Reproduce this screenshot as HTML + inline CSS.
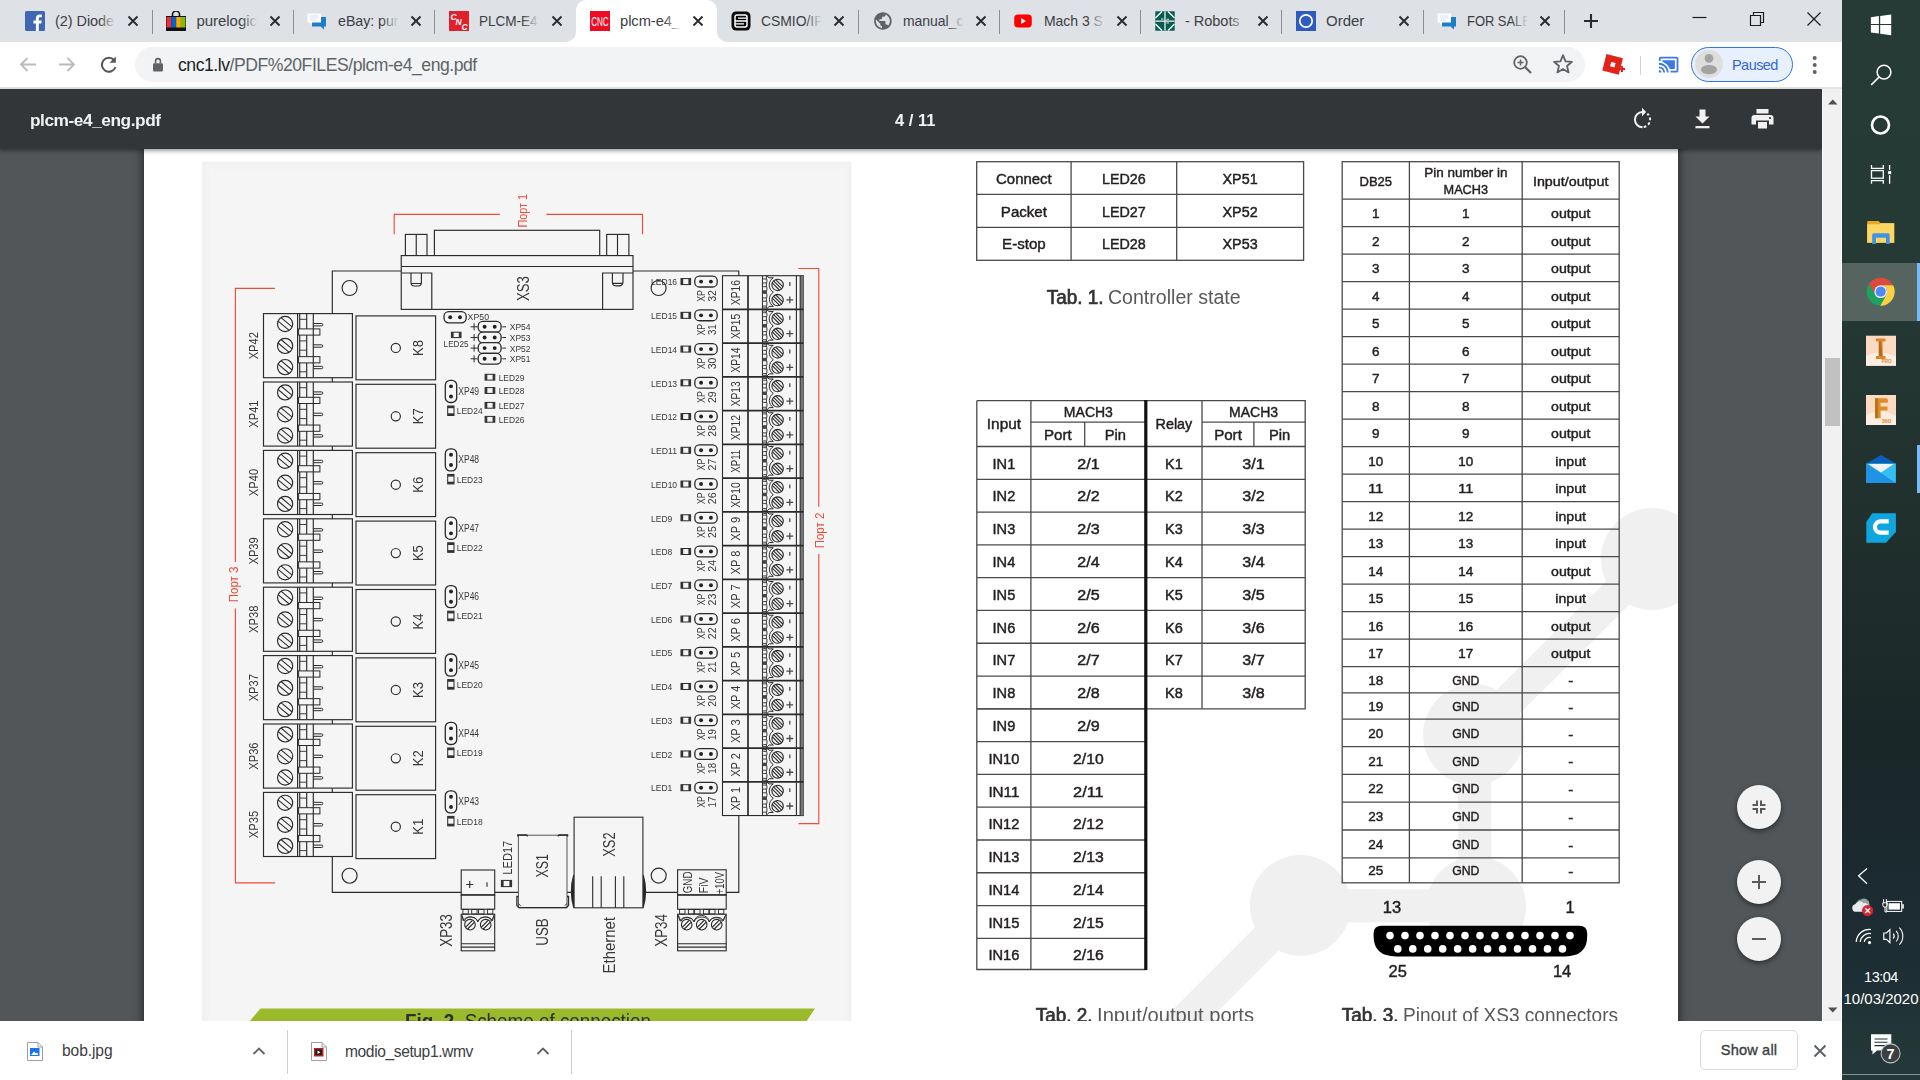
<!DOCTYPE html>
<html lang="en">
<head>
<meta charset="utf-8">
<title>plcm-e4_eng.pdf</title>
<style>
*{box-sizing:border-box;margin:0;padding:0}
html,body{width:1920px;height:1080px;overflow:hidden;background:#fff;font-family:"Liberation Sans",sans-serif;}
.abs{position:absolute}
#tabstrip{position:absolute;left:0;top:0;width:1842px;height:42px;background:#dee1e6}
.tab{position:absolute;top:0;height:42px}
.tab .ttl{position:absolute;top:11px;left:0;font-size:15px;line-height:20px;color:#3c4043;white-space:nowrap;overflow:hidden;letter-spacing:-0.05px}
.tab .fade{position:absolute;top:8px;width:20px;height:26px}
.tsep{position:absolute;top:10px;width:1px;height:24px;background:#8b8e93}
.tx{position:absolute;top:15px;width:12px;height:12px}
#acttab{position:absolute;left:576px;top:0;width:141px;height:42px;background:#fff;border-radius:10px 10px 0 0}
#toolbar{position:absolute;left:0;top:42px;width:1842px;height:46px;background:#fff}
#tbline{position:absolute;left:0;top:87px;width:1842px;height:2px;background:#e4e5e7}
#omni{position:absolute;left:135px;top:47px;width:1450px;height:35px;border-radius:18px;background:#f1f3f4}
#url{position:absolute;left:178px;top:53px;font-size:17.6px;line-height:24px;color:#5f6368;white-space:nowrap;letter-spacing:-0.46px}
#url b{font-weight:normal;color:#202124}
#pill{position:absolute;left:1691px;top:47px;width:102px;height:35px;border-radius:18px;border:1.600px solid #2f74e0;background:#e9f0fd}
#pill .av{position:absolute;left:2.500px;top:2px;width:28px;height:28px;border-radius:14px;background:#dedede;overflow:hidden}
#pill .tx2{position:absolute;left:40px;top:5px;font-size:14.5px;line-height:24px;color:#3367d6;letter-spacing:-0.55px}
#pdfbar{position:absolute;left:0;top:89px;width:1822px;height:60px;background:#323639;box-shadow:0 2px 4px rgba(0,0,0,.38);z-index:5}
#pdfbar .name{position:absolute;left:30px;top:19.5px;font-size:17.3px;font-weight:bold;color:#f1f1f1;line-height:22px;letter-spacing:-0.45px}
#pdfbar .pg{position:absolute;left:895px;top:21px;font-size:16.5px;font-weight:bold;color:#f1f1f1;line-height:20px;letter-spacing:0px;white-space:pre}
#viewer{position:absolute;left:0;top:149px;width:1823px;height:871.600px;background:#525659;overflow:hidden}
#page{position:absolute;left:144px;top:-10px;width:1534px;height:900px;background:#fff;box-shadow:0 0 9px 1px rgba(0,0,0,.55)}
#sb{position:absolute;left:1822px;top:89px;width:20px;height:931.600px;background:#f1f1f1;z-index:6;border-left:1px solid #fbfbfb;border-right:1px solid #fbfbfb}
#sb .th{position:absolute;left:2px;top:269px;width:15px;height:68px;background:#c1c1c1}
#dl{position:absolute;left:0;top:1020.600px;width:1842px;height:60px;background:#fff}
#dl .nm{position:absolute;top:21px;font-size:15.6px;line-height:20px;color:#3c4043;letter-spacing:-0.1px}
#dl .sp{position:absolute;top:9px;width:1px;height:44px;background:#d0d0d0}
#showall{position:absolute;left:1700px;top:9.700px;width:98px;height:39.500px;border:1px solid #dadce0;border-radius:5px;font-size:14.600px;line-height:38px;text-align:center;color:#3c4043;font-weight:normal;letter-spacing:0.150px;-webkit-text-stroke:0.350px #3c4043}
#task{position:absolute;left:1842px;top:0;width:78px;height:1080px;background:linear-gradient(180deg,#263b36 0%,#263a35 22%,#22332f 42%,#1e2d2b 55%,#1a2728 68%,#1b2a30 80%,#1d2e34 90%,#223638 96%,#26393a 100%)}
.zb{position:absolute;width:44px;height:44px;border-radius:22px;background:#f2f2f2;box-shadow:0 2px 5px rgba(0,0,0,.5)}
</style>
</head>
<body>

<div id="tabstrip"></div>
<div id="acttab"></div>
<svg class="abs" style="left:566px;top:32px" width="10" height="10"><path d="M10 0 V10 H0 A10 10 0 0 0 10 0Z" fill="#fff"/></svg>
<svg class="abs" style="left:717px;top:32px" width="10" height="10"><path d="M0 0 V10 H10 A10 10 0 0 1 0 0Z" fill="#fff"/></svg>
<div class="tab" style="left:10.8px;width:141.2px">
<svg class="abs" style="left:14.2px;top:11px" width="20" height="20" viewBox="0 0 20 20"><rect width="20" height="20" rx="1.5" fill="#4267b2"/><path d="M13.8 20v-7.6h2.5l.4-3h-2.9V7.6c0-.9.3-1.4 1.5-1.4h1.5V3.5c-.3 0-1.200-.1-2.200-.1-2.200 0-3.700 1.300-3.700 3.800v2.200H8.400v3h2.500V20z" fill="#fff"/></svg>
<div class="ttl" style="left:44.5px;width:64px"><span style="display:inline-block;transform:scaleX(0.965);transform-origin:0 50%">(2) Diode</span></div>
<div class="fade" style="left:88.5px;background:linear-gradient(90deg,rgba(222,225,230,0),rgba(222,225,230,1) 85%)"></div>
<svg class="tx" style="left:116.5px" viewBox="0 0 12 12"><path d="M1.500 1.500 L10.500 10.500 M10.500 1.500 L1.500 10.500" stroke="#2a2c30" stroke-width="1.900"/></svg>
</div>
<div class="tsep" style="left:151.7px"></div>
<div class="tab" style="left:152.0px;width:141.2px">
<svg class="abs" style="left:14.2px;top:11px" width="20" height="20" viewBox="0 0 20 20"><path d="M6.500 5 V3.500 A3.500 3.500 0 0 1 13.500 3.500 V5" fill="none" stroke="#111" stroke-width="1.600"/><rect x="0" y="5" width="20" height="15" fill="#111"/><rect x="0.500" y="6" width="5" height="10.500" fill="#e53238"/><rect x="5.500" y="6" width="4.700" height="10.500" fill="#0064d2"/><rect x="10.200" y="6" width="4.700" height="10.500" fill="#f5af02"/><rect x="14.900" y="6" width="4.600" height="10.500" fill="#86b817"/></svg>
<div class="ttl" style="left:44.5px;width:64px"><span style="display:inline-block;transform:scaleX(1.0);transform-origin:0 50%">purelogic</span></div>
<div class="fade" style="left:88.5px;background:linear-gradient(90deg,rgba(222,225,230,0),rgba(222,225,230,1) 85%)"></div>
<svg class="tx" style="left:116.5px" viewBox="0 0 12 12"><path d="M1.500 1.500 L10.500 10.500 M10.500 1.500 L1.500 10.500" stroke="#2a2c30" stroke-width="1.900"/></svg>
</div>
<div class="tsep" style="left:292.9px"></div>
<div class="tab" style="left:293.2px;width:141.2px">
<svg class="abs" style="left:14.2px;top:11px" width="20" height="20" viewBox="0 0 20 20"><path d="M5 6 H19 V15.500 H17 V18.500 L13.500 15.500 H5Z" fill="#1e7fc8"/><path d="M0.500 2.500 H14 V11.500 H5.500 L3 14 V11.500 H0.500Z" fill="#fafcff"/><path d="M3 5h8M3 7h8M3 9h6" stroke="#d5dde6" stroke-width=".7"/></svg>
<div class="ttl" style="left:44.5px;width:64px"><span style="display:inline-block;transform:scaleX(0.95);transform-origin:0 50%">eBay: pur</span></div>
<div class="fade" style="left:88.5px;background:linear-gradient(90deg,rgba(222,225,230,0),rgba(222,225,230,1) 85%)"></div>
<svg class="tx" style="left:116.5px" viewBox="0 0 12 12"><path d="M1.500 1.500 L10.500 10.500 M10.500 1.500 L1.500 10.500" stroke="#2a2c30" stroke-width="1.900"/></svg>
</div>
<div class="tsep" style="left:434.1px"></div>
<div class="tab" style="left:434.4px;width:141.2px">
<svg class="abs" style="left:14.2px;top:11px" width="20" height="20" viewBox="0 0 20 20"><rect width="20" height="20" fill="#e0202b"/><text x="1.500" y="8.500" font-size="8.500" font-weight="bold" font-style="italic" fill="#fff" font-family="Liberation Sans">C</text><text x="6.500" y="14" font-size="8.500" font-weight="bold" font-style="italic" fill="#fff" font-family="Liberation Sans">N</text><text x="12.500" y="19" font-size="8.500" font-weight="bold" font-style="italic" fill="#fff" font-family="Liberation Sans">C</text></svg>
<div class="ttl" style="left:44.5px;width:63px"><span style="display:inline-block;transform:scaleX(0.903);transform-origin:0 50%">PLCM-E4</span></div>
<div class="fade" style="left:87.5px;background:linear-gradient(90deg,rgba(222,225,230,0),rgba(222,225,230,1) 85%)"></div>
<svg class="tx" style="left:116.5px" viewBox="0 0 12 12"><path d="M1.500 1.500 L10.500 10.500 M10.500 1.500 L1.500 10.500" stroke="#2a2c30" stroke-width="1.900"/></svg>
</div>
<div class="tab" style="left:575.6px;width:141.2px">
<svg class="abs" style="left:14.2px;top:11px" width="20" height="20" viewBox="0 0 20 20"><rect width="20" height="20" fill="#f00b24"/><text x="1.200" y="14.500" font-size="13" textLength="17.500" lengthAdjust="spacingAndGlyphs" fill="#fff" font-family="Liberation Sans">CNC</text></svg>
<div class="ttl" style="left:44.5px;width:64px"><span style="display:inline-block;transform:scaleX(0.98);transform-origin:0 50%">plcm-e4_</span></div>
<div class="fade" style="left:88.5px;background:linear-gradient(90deg,rgba(255,255,255,0),rgba(255,255,255,1) 85%)"></div>
<svg class="tx" style="left:116.5px" viewBox="0 0 12 12"><path d="M1.500 1.500 L10.500 10.500 M10.500 1.500 L1.500 10.500" stroke="#2a2c30" stroke-width="1.900"/></svg>
</div>
<div class="tab" style="left:716.8px;width:141.2px">
<svg class="abs" style="left:14.2px;top:11px" width="20" height="20" viewBox="0 0 20 20"><rect x="0.500" y="0.500" width="19" height="19" rx="4.500" fill="#0a0a0a"/><rect x="4" y="4" width="12" height="12" rx="2" fill="none" stroke="#fff" stroke-width="1.500"/><path d="M4 10 H16 M7 7.200 H16 M4 12.800 H13" stroke="#fff" stroke-width="1.300"/></svg>
<div class="ttl" style="left:44.5px;width:64px"><span style="display:inline-block;transform:scaleX(0.93);transform-origin:0 50%">CSMIO/IP</span></div>
<div class="fade" style="left:88.5px;background:linear-gradient(90deg,rgba(222,225,230,0),rgba(222,225,230,1) 85%)"></div>
<svg class="tx" style="left:116.5px" viewBox="0 0 12 12"><path d="M1.500 1.500 L10.500 10.500 M10.500 1.500 L1.500 10.500" stroke="#2a2c30" stroke-width="1.900"/></svg>
</div>
<div class="tsep" style="left:857.7px"></div>
<div class="tab" style="left:858.0px;width:141.2px">
<svg class="abs" style="left:14.2px;top:11px" width="20" height="20" viewBox="0 0 20 20"><g transform="translate(0.400 -0.500) scale(0.875)"><path d="M12 2C6.480 2 2 6.480 2 12s4.480 10 10 10 10-4.480 10-10S17.520 2 12 2zm-1 17.930c-3.950-.490-7-3.850-7-7.930 0-.620.080-1.210.210-1.790L9 15v1c0 1.100.900 2 2 2v1.930zm6.900-2.540c-.260-.810-1-1.390-1.900-1.390h-1v-3c0-.550-.450-1-1-1H8v-2h2c.550 0 1-.450 1-1V7h2c1.100 0 2-.900 2-2v-.410c2.930 1.190 5 4.060 5 7.410 0 2.080-.800 3.970-2.100 5.390z" fill="#5f6368"/></g></svg>
<div class="ttl" style="left:44.5px;width:64px"><span style="display:inline-block;transform:scaleX(0.934);transform-origin:0 50%">manual_c</span></div>
<div class="fade" style="left:88.5px;background:linear-gradient(90deg,rgba(222,225,230,0),rgba(222,225,230,1) 85%)"></div>
<svg class="tx" style="left:116.5px" viewBox="0 0 12 12"><path d="M1.500 1.500 L10.500 10.500 M10.500 1.500 L1.500 10.500" stroke="#2a2c30" stroke-width="1.900"/></svg>
</div>
<div class="tsep" style="left:998.9px"></div>
<div class="tab" style="left:999.2px;width:141.2px">
<svg class="abs" style="left:14.2px;top:11px" width="20" height="20" viewBox="0 0 20 20"><rect x="1.200" y="3.400" width="17.600" height="13" rx="3.600" fill="#f00"/><path d="M8.200 6.900 L13 9.900 L8.200 12.900Z" fill="#fff"/></svg>
<div class="ttl" style="left:44.5px;width:64px"><span style="display:inline-block;transform:scaleX(0.934);transform-origin:0 50%">Mach 3 S</span></div>
<div class="fade" style="left:88.5px;background:linear-gradient(90deg,rgba(222,225,230,0),rgba(222,225,230,1) 85%)"></div>
<svg class="tx" style="left:116.5px" viewBox="0 0 12 12"><path d="M1.500 1.500 L10.500 10.500 M10.500 1.500 L1.500 10.500" stroke="#2a2c30" stroke-width="1.900"/></svg>
</div>
<div class="tsep" style="left:1140.1px"></div>
<div class="tab" style="left:1140.4px;width:141.2px">
<svg class="abs" style="left:14.2px;top:11px" width="20" height="20" viewBox="0 0 20 20"><rect x="0.300" y="0.300" width="19.400" height="19.400" fill="#0b5a50"/><path d="M0.500 7 L7 0.500 M13 0.500 L19.500 7 M19.500 13 L13 19.500 M7 19.500 L0.500 13 M10 0.500 V19.500 M0.500 10 H19.500" stroke="#f2f7f5" stroke-width="1.250" fill="none"/><path d="M2.800 4.300 L4.300 2.800 M15.700 2.800 L17.200 4.300 M17.200 15.700 L15.700 17.200 M4.300 17.200 L2.800 15.700 M6 8 H8.500 M11.500 8.300 H14 M11.500 12 H14" stroke="#dbe9e5" stroke-width="1.100" fill="none"/></svg>
<div class="ttl" style="left:44.5px;width:64px"><span style="display:inline-block;transform:scaleX(0.97);transform-origin:0 50%">- Robots</span></div>
<div class="fade" style="left:88.5px;background:linear-gradient(90deg,rgba(222,225,230,0),rgba(222,225,230,1) 85%)"></div>
<svg class="tx" style="left:116.5px" viewBox="0 0 12 12"><path d="M1.500 1.500 L10.500 10.500 M10.500 1.500 L1.500 10.500" stroke="#2a2c30" stroke-width="1.900"/></svg>
</div>
<div class="tsep" style="left:1281.3px"></div>
<div class="tab" style="left:1281.6px;width:141.2px">
<svg class="abs" style="left:14.2px;top:11px" width="20" height="20" viewBox="0 0 20 20"><rect width="20" height="20" fill="#2f5bbf"/><circle cx="10" cy="10" r="6.200" fill="none" stroke="#fff" stroke-width="1.700"/></svg>
<div class="ttl" style="left:44.5px;width:64px"><span style="display:inline-block;transform:scaleX(1.0);transform-origin:0 50%">Order</span></div>
<div class="fade" style="left:88.5px;background:linear-gradient(90deg,rgba(222,225,230,0),rgba(222,225,230,1) 85%)"></div>
<svg class="tx" style="left:116.5px" viewBox="0 0 12 12"><path d="M1.500 1.500 L10.500 10.500 M10.500 1.500 L1.500 10.500" stroke="#2a2c30" stroke-width="1.900"/></svg>
</div>
<div class="tsep" style="left:1422.5px"></div>
<div class="tab" style="left:1422.8px;width:141.2px">
<svg class="abs" style="left:14.2px;top:11px" width="20" height="20" viewBox="0 0 20 20"><path d="M5 6 H19 V15.500 H17 V18.500 L13.500 15.500 H5Z" fill="#1e7fc8"/><path d="M0.500 2.500 H14 V11.500 H5.500 L3 14 V11.500 H0.500Z" fill="#fafcff"/><path d="M3 5h8M3 7h8M3 9h6" stroke="#d5dde6" stroke-width=".7"/></svg>
<div class="ttl" style="left:44.5px;width:64px"><span style="display:inline-block;transform:scaleX(0.865);transform-origin:0 50%">FOR SALE</span></div>
<div class="fade" style="left:88.5px;background:linear-gradient(90deg,rgba(222,225,230,0),rgba(222,225,230,1) 85%)"></div>
<svg class="tx" style="left:116.5px" viewBox="0 0 12 12"><path d="M1.500 1.500 L10.500 10.500 M10.500 1.500 L1.500 10.500" stroke="#2a2c30" stroke-width="1.900"/></svg>
</div>
<div class="tsep" style="left:1563.7px"></div>
<svg class="abs" style="left:1583px;top:13px" width="16" height="16"><path d="M8 1 V15 M1 8 H15" stroke="#2a2c30" stroke-width="2.100"/></svg>
<svg class="abs" style="left:1690px;top:8px" width="140" height="24"><path d="M2.500 9.500 H16.500" stroke="#1b1b1b" stroke-width="1.200"/><path d="M60.500 7.500 H70.500 V17.500 H60.500Z M63.500 7.500 V4.500 H73.500 V14.500 H70.500" fill="none" stroke="#1b1b1b" stroke-width="1.200"/><path d="M117.500 4.500 L130.500 17.500 M130.500 4.500 L117.500 17.500" stroke="#1b1b1b" stroke-width="1.200"/></svg>
<div id="toolbar"></div><div id="tbline"></div>
<svg class="abs" style="left:17px;top:54px" width="110" height="22"><path d="M19 10.500 H4 M10.500 4 L4 10.500 L10.500 17" fill="none" stroke="#babcbe" stroke-width="1.900"/><path d="M42 10.500 H57 M50.500 4 L57 10.500 L50.500 17" fill="none" stroke="#babcbe" stroke-width="1.900"/><path d="M97.200 6.200 A7 7 0 1 0 98.500 13" fill="none" stroke="#54575b" stroke-width="2"/><path d="M98.800 2.500 V8.800 H92.500Z" fill="#54575b"/></svg>
<div id="omni"></div>
<svg class="abs" style="left:151px;top:55px" width="14" height="18"><rect x="2" y="8.300" width="10" height="8.200" rx="1.100" fill="#5f6368"/><path d="M4.600 8.300 V6 A2.400 2.400 0 0 1 9.400 6 V8.300" fill="none" stroke="#5f6368" stroke-width="1.600"/></svg>
<div id="url"><b>cnc1.lv</b>/PDF%20FILES/plcm-e4_eng.pdf</div>
<svg class="abs" style="left:1511px;top:53px" width="24" height="24"><circle cx="9.500" cy="9.500" r="6.300" fill="none" stroke="#5f6368" stroke-width="1.800"/><path d="M14 14 L20 20" stroke="#5f6368" stroke-width="2.200"/><path d="M9.500 6.500 V12.500 M6.500 9.500 H12.500" stroke="#5f6368" stroke-width="1.500"/></svg>
<svg class="abs" style="left:1551px;top:52px" width="24" height="24"><path d="M12 3.200 L14.500 9.300 L21 9.800 L16 14 L17.600 20.400 L12 16.900 L6.400 20.400 L8 14 L3 9.800 L9.500 9.300Z" fill="none" stroke="#5f6368" stroke-width="1.800" stroke-linejoin="round"/></svg>
<svg class="abs" style="left:1600px;top:52px" width="28" height="26"><g transform="rotate(14 13 13)"><rect x="4" y="4" width="17" height="17" fill="#e2231a"/><rect x="10.500" y="10.500" width="4.500" height="4.500" fill="#fff"/></g><path d="M19 17 h6 M22 14 v6" stroke="#e2231a" stroke-width="2"/></svg>
<div class="abs" style="left:1640px;top:56px;width:1px;height:19px;background:#cfd1d4"></div>
<svg class="abs" style="left:1658.100px;top:54.200px" width="22" height="20" viewBox="0 0 24.830 22.570"><path d="M1 18v3h3c0-1.660-1.340-3-3-3zm0-4v2c2.760 0 5 2.240 5 5h2c0-3.870-3.130-7-7-7zm18-7H5v1.630c3.960 1.280 7.090 4.410 8.370 8.370H19V7zM1 10v2c4.970 0 9 4.030 9 9h2c0-6.080-4.930-11-11-11zm20-7H3c-1.100 0-2 .900-2 2v3h2V5h18v14h-7v2h7c1.100 0 2-.900 2-2V5c0-1.100-.900-2-2-2z" fill="#3b78e7"/></svg>
<div id="pill"><div class="av"><svg width="28" height="28"><circle cx="14" cy="8.300" r="4.400" fill="#a3a3a3"/><ellipse cx="14" cy="19.600" rx="8" ry="4.700" fill="#a3a3a3"/></svg></div><div class="tx2">Paused</div></div>
<svg class="abs" style="left:1811px;top:55px" width="8" height="22"><circle cx="3.700" cy="3" r="2" fill="#5f6368"/><circle cx="3.700" cy="10" r="2" fill="#5f6368"/><circle cx="3.700" cy="17" r="2" fill="#5f6368"/></svg>
<div id="pdfbar"><div class="name">plcm-e4_eng.pdf</div><div class="pg">4 / 11</div>
<svg class="abs" style="left:1630px;top:18px" width="24" height="24"><path d="M12.500 5 A7.600 7.600 0 1 0 12.500 20.200" fill="none" stroke="#f1f1f1" stroke-width="2"/><path d="M12.500 20.200 A7.600 7.600 0 0 0 17.300 6.700" fill="none" stroke="#f1f1f1" stroke-width="2" stroke-dasharray="2.700 2.300" stroke-dashoffset="-1.200"/><path d="M12 0.800 L16.200 5 L12 9.200Z" fill="#f1f1f1"/></svg>
<svg class="abs" style="left:1691px;top:18px" width="24" height="24"><path d="M8.500 2.500 H14.500 V9.500 H18.500 L11.500 16.500 L4.500 9.500 H8.500Z" fill="#f1f1f1"/><rect x="4.500" y="19" width="14" height="2.300" fill="#f1f1f1"/></svg>
<svg class="abs" style="left:1750px;top:18px" width="26" height="24"><rect x="6.500" y="2" width="12" height="4.500" fill="#f1f1f1"/><path d="M4.500 8 H20.500 A3 3 0 0 1 23.500 11 V17.500 H19 V13.500 H6 V17.500 H1.500 V11 A3 3 0 0 1 4.500 8Z" fill="#f1f1f1"/><rect x="8" y="15" width="9" height="6.500" fill="#f1f1f1"/><circle cx="20" cy="11" r="1.100" fill="#323639"/></svg>
</div>
<div id="viewer"><div id="page"></div>
<svg class="abs" style="left:0;top:-149px;will-change:transform" width="1823" height="1080" viewBox="0 0 1823 1080">
<clipPath id="pgclip"><rect x="144" y="149" width="1533.500" height="880"/></clipPath>
<g fill="#f0f0f0" stroke="#f0f0f0" clip-path="url(#pgclip)">
<circle cx="1652" cy="559" r="51" stroke="none"/>
<circle cx="1473.5" cy="734.6" r="50.5" stroke="none"/>
<circle cx="1476" cy="906.5" r="50" stroke="none"/>
<circle cx="1300.3" cy="905.5" r="50.4" stroke="none"/>
<path d="M1652 559 L1474.500 735 L1475 906 L1300.300 905.500 L1160 1045.800" fill="none" stroke-width="33"/>
</g>

<rect x="202" y="161.700" width="649.500" height="880" fill="#f1f1f1"/><rect x="205" y="164.700" width="643.500" height="880" fill="#f3f3f3"/><rect x="209" y="168.700" width="635.500" height="880" fill="#f5f5f5"/>
<g fill="none" stroke="#2a2a2a" stroke-width="1.150" font-family="Liberation Sans">
<path d="M401.250 271 H332.300 V892.400 H738.800 V271 H633"/>
<circle cx="349.6" cy="288" r="7.5"/>
<circle cx="658.6" cy="288" r="7.5"/>
<circle cx="349.6" cy="875.7" r="7.5"/>
<circle cx="658.7" cy="875.6" r="7.5"/>
<rect x="434.4" y="230.3" width="165.3" height="25.3" fill="#f5f5f5"/>
<rect x="405.4" y="234.4" width="21.6" height="21.2" fill="#f5f5f5"/>
<path d="M416.25 234.4L416.25 255.6"/>
<rect x="606.7" y="234.4" width="22.2" height="21.2" fill="#f5f5f5"/>
<path d="M617.5 234.4L617.5 255.6"/>
<rect x="401.25" y="255.6" width="231.75" height="53.8" fill="#f5f5f5"/>
<path d="M401.25 266.5L633 266.5"/>
<path d="M401.250 273 H431.800 V309.400 M633 273 H602.600 V309.400"/>
<path d="M411 273 V282.500 A3.500 3.500 0 0 0 414.500 286 H418 A3.500 3.500 0 0 0 421.400 282.500 V273 M411 283.500 H421.400"/>
<path d="M612.400 273 V282.300 A3.500 3.500 0 0 0 615.900 285.800 H619.500 A3.500 3.500 0 0 0 623 282.300 V273 M612.400 283.300 H623"/>
<rect x="263.5" y="313.6" width="88.9" height="64.1" fill="#f5f5f5"/>
<circle cx="285.1" cy="324" r="7.6" fill="#f5f5f5"/><path d="M281.01 317.59L292.12 326.91" stroke-width="1.05"/><path d="M278.08 321.09L289.19 330.41" stroke-width="1.05"/>
<circle cx="285.1" cy="345.9" r="7.6" fill="#f5f5f5"/><path d="M281.01 339.49L292.12 348.81" stroke-width="1.05"/><path d="M278.08 342.99L289.19 352.31" stroke-width="1.05"/>
<circle cx="285.1" cy="367.1" r="7.6" fill="#f5f5f5"/><path d="M281.01 360.69L292.12 370.01" stroke-width="1.05"/><path d="M278.08 364.19L289.19 373.51" stroke-width="1.05"/>
<path d="M297.6 313.6L297.6 377.7"/>
<path d="M299.7 313.6L299.7 377.7"/>
<path d="M306.7 313.6L306.7 377.7"/>
<path d="M313.3 313.6L313.3 377.7"/>
<path d="M299.7 319.3L306.7 319.3" stroke-width="0.9"/>
<path d="M299.7 340.9L306.7 340.9" stroke-width="0.9"/>
<path d="M299.7 350.2L306.7 350.2" stroke-width="0.9"/>
<path d="M299.7 371.8L306.7 371.8" stroke-width="0.9"/>
<rect x="298.6" y="328.9" width="21.3" height="6.2" fill="#f5f5f5" stroke-width="1"/>
<path d="M313.3 328.9L313.3 335.1"/>
<rect x="298.6" y="356.65" width="21.3" height="6.25" fill="#f5f5f5" stroke-width="1"/>
<path d="M313.3 356.65L313.3 362.9"/>
<path d="M313.300 323.5 H321.600 A1.200 1.200 0 0 1 321.600 325.9 H313.300" stroke-width="1"/>
<path d="M313.300 344.8 H321.600 A1.200 1.200 0 0 1 321.600 347.2 H313.300" stroke-width="1"/>
<path d="M313.300 366.3 H321.600 A1.200 1.200 0 0 1 321.600 368.7 H313.300" stroke-width="1"/>
<rect x="356" y="315.9" width="79.6" height="63.9" fill="#f5f5f5"/>
<circle cx="395.8" cy="347.9" r="4.6"/>
<rect x="263.5" y="382" width="88.9" height="64.1" fill="#f5f5f5"/>
<circle cx="285.1" cy="392.4" r="7.6" fill="#f5f5f5"/><path d="M281.01 385.99L292.12 395.31" stroke-width="1.05"/><path d="M278.08 389.49L289.19 398.81" stroke-width="1.05"/>
<circle cx="285.1" cy="414.3" r="7.6" fill="#f5f5f5"/><path d="M281.01 407.89L292.12 417.21" stroke-width="1.05"/><path d="M278.08 411.39L289.19 420.71" stroke-width="1.05"/>
<circle cx="285.1" cy="435.5" r="7.6" fill="#f5f5f5"/><path d="M281.01 429.09L292.12 438.41" stroke-width="1.05"/><path d="M278.08 432.59L289.19 441.91" stroke-width="1.05"/>
<path d="M297.6 382L297.6 446.1"/>
<path d="M299.7 382L299.7 446.1"/>
<path d="M306.7 382L306.7 446.1"/>
<path d="M313.3 382L313.3 446.1"/>
<path d="M299.7 387.7L306.7 387.7" stroke-width="0.9"/>
<path d="M299.7 409.3L306.7 409.3" stroke-width="0.9"/>
<path d="M299.7 418.6L306.7 418.6" stroke-width="0.9"/>
<path d="M299.7 440.2L306.7 440.2" stroke-width="0.9"/>
<rect x="298.6" y="397.3" width="21.3" height="6.2" fill="#f5f5f5" stroke-width="1"/>
<path d="M313.3 397.3L313.3 403.5"/>
<rect x="298.6" y="425.05" width="21.3" height="6.25" fill="#f5f5f5" stroke-width="1"/>
<path d="M313.3 425.05L313.3 431.3"/>
<path d="M313.300 391.9 H321.600 A1.200 1.200 0 0 1 321.600 394.3 H313.300" stroke-width="1"/>
<path d="M313.300 413.2 H321.600 A1.200 1.200 0 0 1 321.600 415.6 H313.300" stroke-width="1"/>
<path d="M313.300 434.7 H321.600 A1.200 1.200 0 0 1 321.600 437.1 H313.300" stroke-width="1"/>
<rect x="356" y="384.3" width="79.6" height="63.9" fill="#f5f5f5"/>
<circle cx="395.8" cy="416.3" r="4.6"/>
<rect x="263.5" y="450.4" width="88.9" height="64.1" fill="#f5f5f5"/>
<circle cx="285.1" cy="460.8" r="7.6" fill="#f5f5f5"/><path d="M281.01 454.39L292.12 463.71" stroke-width="1.05"/><path d="M278.08 457.89L289.19 467.21" stroke-width="1.05"/>
<circle cx="285.1" cy="482.7" r="7.6" fill="#f5f5f5"/><path d="M281.01 476.29L292.12 485.61" stroke-width="1.05"/><path d="M278.08 479.79L289.19 489.11" stroke-width="1.05"/>
<circle cx="285.1" cy="503.9" r="7.6" fill="#f5f5f5"/><path d="M281.01 497.49L292.12 506.81" stroke-width="1.05"/><path d="M278.08 500.99L289.19 510.31" stroke-width="1.05"/>
<path d="M297.6 450.4L297.6 514.5"/>
<path d="M299.7 450.4L299.7 514.5"/>
<path d="M306.7 450.4L306.7 514.5"/>
<path d="M313.3 450.4L313.3 514.5"/>
<path d="M299.7 456.1L306.7 456.1" stroke-width="0.9"/>
<path d="M299.7 477.7L306.7 477.7" stroke-width="0.9"/>
<path d="M299.7 487L306.7 487" stroke-width="0.9"/>
<path d="M299.7 508.6L306.7 508.6" stroke-width="0.9"/>
<rect x="298.6" y="465.7" width="21.3" height="6.2" fill="#f5f5f5" stroke-width="1"/>
<path d="M313.3 465.7L313.3 471.9"/>
<rect x="298.6" y="493.45" width="21.3" height="6.25" fill="#f5f5f5" stroke-width="1"/>
<path d="M313.3 493.45L313.3 499.7"/>
<path d="M313.300 460.3 H321.600 A1.200 1.200 0 0 1 321.600 462.7 H313.300" stroke-width="1"/>
<path d="M313.300 481.6 H321.600 A1.200 1.200 0 0 1 321.600 484 H313.300" stroke-width="1"/>
<path d="M313.300 503.1 H321.600 A1.200 1.200 0 0 1 321.600 505.5 H313.300" stroke-width="1"/>
<rect x="356" y="452.7" width="79.6" height="63.9" fill="#f5f5f5"/>
<circle cx="395.8" cy="484.7" r="4.6"/>
<rect x="263.5" y="518.8" width="88.9" height="64.1" fill="#f5f5f5"/>
<circle cx="285.1" cy="529.2" r="7.6" fill="#f5f5f5"/><path d="M281.01 522.79L292.12 532.11" stroke-width="1.05"/><path d="M278.08 526.29L289.19 535.61" stroke-width="1.05"/>
<circle cx="285.1" cy="551.1" r="7.6" fill="#f5f5f5"/><path d="M281.01 544.69L292.12 554.01" stroke-width="1.05"/><path d="M278.08 548.19L289.19 557.51" stroke-width="1.05"/>
<circle cx="285.1" cy="572.3" r="7.6" fill="#f5f5f5"/><path d="M281.01 565.89L292.12 575.21" stroke-width="1.05"/><path d="M278.08 569.39L289.19 578.71" stroke-width="1.05"/>
<path d="M297.6 518.8L297.6 582.9"/>
<path d="M299.7 518.8L299.7 582.9"/>
<path d="M306.7 518.8L306.7 582.9"/>
<path d="M313.3 518.8L313.3 582.9"/>
<path d="M299.7 524.5L306.7 524.5" stroke-width="0.9"/>
<path d="M299.7 546.1L306.7 546.1" stroke-width="0.9"/>
<path d="M299.7 555.4L306.7 555.4" stroke-width="0.9"/>
<path d="M299.7 577L306.7 577" stroke-width="0.9"/>
<rect x="298.6" y="534.1" width="21.3" height="6.2" fill="#f5f5f5" stroke-width="1"/>
<path d="M313.3 534.1L313.3 540.3"/>
<rect x="298.6" y="561.85" width="21.3" height="6.25" fill="#f5f5f5" stroke-width="1"/>
<path d="M313.3 561.85L313.3 568.1"/>
<path d="M313.300 528.7 H321.600 A1.200 1.200 0 0 1 321.600 531.1 H313.300" stroke-width="1"/>
<path d="M313.300 550 H321.600 A1.200 1.200 0 0 1 321.600 552.4 H313.300" stroke-width="1"/>
<path d="M313.300 571.5 H321.600 A1.200 1.200 0 0 1 321.600 573.9 H313.300" stroke-width="1"/>
<rect x="356" y="521.1" width="79.6" height="63.9" fill="#f5f5f5"/>
<circle cx="395.8" cy="553.1" r="4.6"/>
<rect x="263.5" y="587.2" width="88.9" height="64.1" fill="#f5f5f5"/>
<circle cx="285.1" cy="597.6" r="7.6" fill="#f5f5f5"/><path d="M281.01 591.19L292.12 600.51" stroke-width="1.05"/><path d="M278.08 594.69L289.19 604.01" stroke-width="1.05"/>
<circle cx="285.1" cy="619.5" r="7.6" fill="#f5f5f5"/><path d="M281.01 613.09L292.12 622.41" stroke-width="1.05"/><path d="M278.08 616.59L289.19 625.91" stroke-width="1.05"/>
<circle cx="285.1" cy="640.7" r="7.6" fill="#f5f5f5"/><path d="M281.01 634.29L292.12 643.61" stroke-width="1.05"/><path d="M278.08 637.79L289.19 647.11" stroke-width="1.05"/>
<path d="M297.6 587.2L297.6 651.3"/>
<path d="M299.7 587.2L299.7 651.3"/>
<path d="M306.7 587.2L306.7 651.3"/>
<path d="M313.3 587.2L313.3 651.3"/>
<path d="M299.7 592.9L306.7 592.9" stroke-width="0.9"/>
<path d="M299.7 614.5L306.7 614.5" stroke-width="0.9"/>
<path d="M299.7 623.8L306.7 623.8" stroke-width="0.9"/>
<path d="M299.7 645.4L306.7 645.4" stroke-width="0.9"/>
<rect x="298.6" y="602.5" width="21.3" height="6.2" fill="#f5f5f5" stroke-width="1"/>
<path d="M313.3 602.5L313.3 608.7"/>
<rect x="298.6" y="630.25" width="21.3" height="6.25" fill="#f5f5f5" stroke-width="1"/>
<path d="M313.3 630.25L313.3 636.5"/>
<path d="M313.300 597.1 H321.600 A1.200 1.200 0 0 1 321.600 599.5 H313.300" stroke-width="1"/>
<path d="M313.300 618.4 H321.600 A1.200 1.200 0 0 1 321.600 620.8 H313.300" stroke-width="1"/>
<path d="M313.300 639.9 H321.600 A1.200 1.200 0 0 1 321.600 642.3 H313.300" stroke-width="1"/>
<rect x="356" y="589.5" width="79.6" height="63.9" fill="#f5f5f5"/>
<circle cx="395.8" cy="621.5" r="4.6"/>
<rect x="263.5" y="655.6" width="88.9" height="64.1" fill="#f5f5f5"/>
<circle cx="285.1" cy="666" r="7.6" fill="#f5f5f5"/><path d="M281.01 659.59L292.12 668.91" stroke-width="1.05"/><path d="M278.08 663.09L289.19 672.41" stroke-width="1.05"/>
<circle cx="285.1" cy="687.9" r="7.6" fill="#f5f5f5"/><path d="M281.01 681.49L292.12 690.81" stroke-width="1.05"/><path d="M278.08 684.99L289.19 694.31" stroke-width="1.05"/>
<circle cx="285.1" cy="709.1" r="7.6" fill="#f5f5f5"/><path d="M281.01 702.69L292.12 712.01" stroke-width="1.05"/><path d="M278.08 706.19L289.19 715.51" stroke-width="1.05"/>
<path d="M297.6 655.6L297.6 719.7"/>
<path d="M299.7 655.6L299.7 719.7"/>
<path d="M306.7 655.6L306.7 719.7"/>
<path d="M313.3 655.6L313.3 719.7"/>
<path d="M299.7 661.3L306.7 661.3" stroke-width="0.9"/>
<path d="M299.7 682.9L306.7 682.9" stroke-width="0.9"/>
<path d="M299.7 692.2L306.7 692.2" stroke-width="0.9"/>
<path d="M299.7 713.8L306.7 713.8" stroke-width="0.9"/>
<rect x="298.6" y="670.9" width="21.3" height="6.2" fill="#f5f5f5" stroke-width="1"/>
<path d="M313.3 670.9L313.3 677.1"/>
<rect x="298.6" y="698.65" width="21.3" height="6.25" fill="#f5f5f5" stroke-width="1"/>
<path d="M313.3 698.65L313.3 704.9"/>
<path d="M313.300 665.5 H321.600 A1.200 1.200 0 0 1 321.600 667.9 H313.300" stroke-width="1"/>
<path d="M313.300 686.8 H321.600 A1.200 1.200 0 0 1 321.600 689.2 H313.300" stroke-width="1"/>
<path d="M313.300 708.3 H321.600 A1.200 1.200 0 0 1 321.600 710.7 H313.300" stroke-width="1"/>
<rect x="356" y="657.9" width="79.6" height="63.9" fill="#f5f5f5"/>
<circle cx="395.8" cy="689.9" r="4.6"/>
<rect x="263.5" y="724" width="88.9" height="64.1" fill="#f5f5f5"/>
<circle cx="285.1" cy="734.4" r="7.6" fill="#f5f5f5"/><path d="M281.01 727.99L292.12 737.31" stroke-width="1.05"/><path d="M278.08 731.49L289.19 740.81" stroke-width="1.05"/>
<circle cx="285.1" cy="756.3" r="7.6" fill="#f5f5f5"/><path d="M281.01 749.89L292.12 759.21" stroke-width="1.05"/><path d="M278.08 753.39L289.19 762.71" stroke-width="1.05"/>
<circle cx="285.1" cy="777.5" r="7.6" fill="#f5f5f5"/><path d="M281.01 771.09L292.12 780.41" stroke-width="1.05"/><path d="M278.08 774.59L289.19 783.91" stroke-width="1.05"/>
<path d="M297.6 724L297.6 788.1"/>
<path d="M299.7 724L299.7 788.1"/>
<path d="M306.7 724L306.7 788.1"/>
<path d="M313.3 724L313.3 788.1"/>
<path d="M299.7 729.7L306.7 729.7" stroke-width="0.9"/>
<path d="M299.7 751.3L306.7 751.3" stroke-width="0.9"/>
<path d="M299.7 760.6L306.7 760.6" stroke-width="0.9"/>
<path d="M299.7 782.2L306.7 782.2" stroke-width="0.9"/>
<rect x="298.6" y="739.3" width="21.3" height="6.2" fill="#f5f5f5" stroke-width="1"/>
<path d="M313.3 739.3L313.3 745.5"/>
<rect x="298.6" y="767.05" width="21.3" height="6.25" fill="#f5f5f5" stroke-width="1"/>
<path d="M313.3 767.05L313.3 773.3"/>
<path d="M313.300 733.9 H321.600 A1.200 1.200 0 0 1 321.600 736.3 H313.300" stroke-width="1"/>
<path d="M313.300 755.2 H321.600 A1.200 1.200 0 0 1 321.600 757.6 H313.300" stroke-width="1"/>
<path d="M313.300 776.7 H321.600 A1.200 1.200 0 0 1 321.600 779.1 H313.300" stroke-width="1"/>
<rect x="356" y="726.3" width="79.6" height="63.9" fill="#f5f5f5"/>
<circle cx="395.8" cy="758.3" r="4.6"/>
<rect x="263.5" y="792.4" width="88.9" height="64.1" fill="#f5f5f5"/>
<circle cx="285.1" cy="802.8" r="7.6" fill="#f5f5f5"/><path d="M281.01 796.39L292.12 805.71" stroke-width="1.05"/><path d="M278.08 799.89L289.19 809.21" stroke-width="1.05"/>
<circle cx="285.1" cy="824.7" r="7.6" fill="#f5f5f5"/><path d="M281.01 818.29L292.12 827.61" stroke-width="1.05"/><path d="M278.08 821.79L289.19 831.11" stroke-width="1.05"/>
<circle cx="285.1" cy="845.9" r="7.6" fill="#f5f5f5"/><path d="M281.01 839.49L292.12 848.81" stroke-width="1.05"/><path d="M278.08 842.99L289.19 852.31" stroke-width="1.05"/>
<path d="M297.6 792.4L297.6 856.5"/>
<path d="M299.7 792.4L299.7 856.5"/>
<path d="M306.7 792.4L306.7 856.5"/>
<path d="M313.3 792.4L313.3 856.5"/>
<path d="M299.7 798.1L306.7 798.1" stroke-width="0.9"/>
<path d="M299.7 819.7L306.7 819.7" stroke-width="0.9"/>
<path d="M299.7 829L306.7 829" stroke-width="0.9"/>
<path d="M299.7 850.6L306.7 850.6" stroke-width="0.9"/>
<rect x="298.6" y="807.7" width="21.3" height="6.2" fill="#f5f5f5" stroke-width="1"/>
<path d="M313.3 807.7L313.3 813.9"/>
<rect x="298.6" y="835.45" width="21.3" height="6.25" fill="#f5f5f5" stroke-width="1"/>
<path d="M313.3 835.45L313.3 841.7"/>
<path d="M313.300 802.3 H321.600 A1.200 1.200 0 0 1 321.600 804.7 H313.300" stroke-width="1"/>
<path d="M313.300 823.6 H321.600 A1.200 1.200 0 0 1 321.600 826 H313.300" stroke-width="1"/>
<path d="M313.300 845.1 H321.600 A1.200 1.200 0 0 1 321.600 847.5 H313.300" stroke-width="1"/>
<rect x="356" y="794.7" width="79.6" height="63.9" fill="#f5f5f5"/>
<circle cx="395.8" cy="826.7" r="4.6"/>
</g>
<g font-family="Liberation Sans">
<text transform="translate(258.38 359.35) rotate(-90)" font-size="12.8" textLength="27.3" lengthAdjust="spacingAndGlyphs" fill="#383838">XP42</text>
<text transform="translate(423.25 355.9) rotate(-90)" font-size="15.3" textLength="16" lengthAdjust="spacingAndGlyphs" fill="#383838">K8</text>
<text transform="translate(258.38 427.75) rotate(-90)" font-size="12.8" textLength="27.3" lengthAdjust="spacingAndGlyphs" fill="#383838">XP41</text>
<text transform="translate(423.25 424.3) rotate(-90)" font-size="15.3" textLength="16" lengthAdjust="spacingAndGlyphs" fill="#383838">K7</text>
<text transform="translate(258.38 496.15) rotate(-90)" font-size="12.8" textLength="27.3" lengthAdjust="spacingAndGlyphs" fill="#383838">XP40</text>
<text transform="translate(423.25 492.7) rotate(-90)" font-size="15.3" textLength="16" lengthAdjust="spacingAndGlyphs" fill="#383838">K6</text>
<text transform="translate(258.38 564.55) rotate(-90)" font-size="12.8" textLength="27.3" lengthAdjust="spacingAndGlyphs" fill="#383838">XP39</text>
<text transform="translate(423.25 561.1) rotate(-90)" font-size="15.3" textLength="16" lengthAdjust="spacingAndGlyphs" fill="#383838">K5</text>
<text transform="translate(258.38 632.95) rotate(-90)" font-size="12.8" textLength="27.3" lengthAdjust="spacingAndGlyphs" fill="#383838">XP38</text>
<text transform="translate(423.25 629.5) rotate(-90)" font-size="15.3" textLength="16" lengthAdjust="spacingAndGlyphs" fill="#383838">K4</text>
<text transform="translate(258.38 701.35) rotate(-90)" font-size="12.8" textLength="27.3" lengthAdjust="spacingAndGlyphs" fill="#383838">XP37</text>
<text transform="translate(423.25 697.9) rotate(-90)" font-size="15.3" textLength="16" lengthAdjust="spacingAndGlyphs" fill="#383838">K3</text>
<text transform="translate(258.38 769.75) rotate(-90)" font-size="12.8" textLength="27.3" lengthAdjust="spacingAndGlyphs" fill="#383838">XP36</text>
<text transform="translate(423.25 766.3) rotate(-90)" font-size="15.3" textLength="16" lengthAdjust="spacingAndGlyphs" fill="#383838">K2</text>
<text transform="translate(258.38 838.15) rotate(-90)" font-size="12.8" textLength="27.3" lengthAdjust="spacingAndGlyphs" fill="#383838">XP35</text>
<text transform="translate(423.25 834.7) rotate(-90)" font-size="15.3" textLength="16" lengthAdjust="spacingAndGlyphs" fill="#383838">K1</text>
</g>
<g fill="none" stroke="#2a2a2a" stroke-width="1.100" font-family="Liberation Sans">
<rect x="445.3" y="790.8" width="11.4" height="22.1" fill="#f5f5f5" stroke-width="1.3" rx="4.84"/><circle cx="451" cy="796.77" r="1.95" fill="#222" stroke="none"/><circle cx="451" cy="806.93" r="1.95" fill="#222" stroke="none"/>
<rect x="447.7" y="816.4" width="6.3" height="9.5" fill="#f5f5f5" stroke-width="1"/><rect x="447.7" y="816.4" width="6.3" height="2.2" fill="#333" stroke="none"/><rect x="447.7" y="823.7" width="6.3" height="2.2" fill="#333" stroke="none"/>
<rect x="445.3" y="722.4" width="11.4" height="22.1" fill="#f5f5f5" stroke-width="1.3" rx="4.84"/><circle cx="451" cy="728.37" r="1.95" fill="#222" stroke="none"/><circle cx="451" cy="738.53" r="1.95" fill="#222" stroke="none"/>
<rect x="447.7" y="748" width="6.3" height="9.5" fill="#f5f5f5" stroke-width="1"/><rect x="447.7" y="748" width="6.3" height="2.2" fill="#333" stroke="none"/><rect x="447.7" y="755.3" width="6.3" height="2.2" fill="#333" stroke="none"/>
<rect x="445.3" y="654" width="11.4" height="22.1" fill="#f5f5f5" stroke-width="1.3" rx="4.84"/><circle cx="451" cy="659.97" r="1.95" fill="#222" stroke="none"/><circle cx="451" cy="670.13" r="1.95" fill="#222" stroke="none"/>
<rect x="447.7" y="679.6" width="6.3" height="9.5" fill="#f5f5f5" stroke-width="1"/><rect x="447.7" y="679.6" width="6.3" height="2.2" fill="#333" stroke="none"/><rect x="447.7" y="686.9" width="6.3" height="2.2" fill="#333" stroke="none"/>
<rect x="445.3" y="585.6" width="11.4" height="22.1" fill="#f5f5f5" stroke-width="1.3" rx="4.84"/><circle cx="451" cy="591.57" r="1.95" fill="#222" stroke="none"/><circle cx="451" cy="601.73" r="1.95" fill="#222" stroke="none"/>
<rect x="447.7" y="611.2" width="6.3" height="9.5" fill="#f5f5f5" stroke-width="1"/><rect x="447.7" y="611.2" width="6.3" height="2.2" fill="#333" stroke="none"/><rect x="447.7" y="618.5" width="6.3" height="2.2" fill="#333" stroke="none"/>
<rect x="445.3" y="517.2" width="11.4" height="22.1" fill="#f5f5f5" stroke-width="1.3" rx="4.84"/><circle cx="451" cy="523.17" r="1.95" fill="#222" stroke="none"/><circle cx="451" cy="533.33" r="1.95" fill="#222" stroke="none"/>
<rect x="447.7" y="542.8" width="6.3" height="9.5" fill="#f5f5f5" stroke-width="1"/><rect x="447.7" y="542.8" width="6.3" height="2.2" fill="#333" stroke="none"/><rect x="447.7" y="550.1" width="6.3" height="2.2" fill="#333" stroke="none"/>
<rect x="445.3" y="448.8" width="11.4" height="22.1" fill="#f5f5f5" stroke-width="1.3" rx="4.84"/><circle cx="451" cy="454.77" r="1.95" fill="#222" stroke="none"/><circle cx="451" cy="464.93" r="1.95" fill="#222" stroke="none"/>
<rect x="447.7" y="474.4" width="6.3" height="9.5" fill="#f5f5f5" stroke-width="1"/><rect x="447.7" y="474.4" width="6.3" height="2.2" fill="#333" stroke="none"/><rect x="447.7" y="481.7" width="6.3" height="2.2" fill="#333" stroke="none"/>
<rect x="445.3" y="380.4" width="11.4" height="22.1" fill="#f5f5f5" stroke-width="1.3" rx="4.84"/><circle cx="451" cy="386.37" r="1.95" fill="#222" stroke="none"/><circle cx="451" cy="396.53" r="1.95" fill="#222" stroke="none"/>
<rect x="447.7" y="406" width="6.3" height="9.5" fill="#f5f5f5" stroke-width="1"/><rect x="447.7" y="406" width="6.3" height="2.2" fill="#333" stroke="none"/><rect x="447.7" y="413.3" width="6.3" height="2.2" fill="#333" stroke="none"/>
<rect x="444" y="311.7" width="22.2" height="11.1" fill="#f5f5f5" stroke-width="1.3" rx="4.72"/><circle cx="450.22" cy="317.25" r="1.95" fill="#222" stroke="none"/><circle cx="459.98" cy="317.25" r="1.95" fill="#222" stroke="none"/>
<rect x="451.4" y="332.2" width="9.6" height="5.4" fill="#f5f5f5" stroke-width="1"/><rect x="451.4" y="332.2" width="2.2" height="5.4" fill="#333" stroke="none"/><rect x="458.8" y="332.2" width="2.2" height="5.4" fill="#333" stroke="none"/>
<rect x="478.2" y="321.4" width="22.9" height="10.8" fill="#f5f5f5" stroke-width="1.3" rx="4.59"/><circle cx="484.61" cy="326.8" r="1.95" fill="#222" stroke="none"/><circle cx="494.69" cy="326.8" r="1.95" fill="#222" stroke="none"/>
<path d="M470.600 326.8 H477.600 M474.100 323.3 V330.3 M502.300 326.8 H506" stroke-width="1"/>
<rect x="478.2" y="332.1" width="22.9" height="10.8" fill="#f5f5f5" stroke-width="1.3" rx="4.59"/><circle cx="484.61" cy="337.5" r="1.95" fill="#222" stroke="none"/><circle cx="494.69" cy="337.5" r="1.95" fill="#222" stroke="none"/>
<path d="M470.600 337.5 H477.600 M474.100 334 V341 M502.300 337.5 H506" stroke-width="1"/>
<rect x="478.2" y="342.7" width="22.9" height="10.8" fill="#f5f5f5" stroke-width="1.3" rx="4.59"/><circle cx="484.61" cy="348.1" r="1.95" fill="#222" stroke="none"/><circle cx="494.69" cy="348.1" r="1.95" fill="#222" stroke="none"/>
<path d="M470.600 348.1 H477.600 M474.100 344.6 V351.6 M502.300 348.1 H506" stroke-width="1"/>
<rect x="478.2" y="353.4" width="22.9" height="10.8" fill="#f5f5f5" stroke-width="1.3" rx="4.59"/><circle cx="484.61" cy="358.8" r="1.95" fill="#222" stroke="none"/><circle cx="494.69" cy="358.8" r="1.95" fill="#222" stroke="none"/>
<path d="M470.600 358.8 H477.600 M474.100 355.3 V362.3 M502.300 358.8 H506" stroke-width="1"/>
<rect x="485.1" y="374.3" width="9.7" height="5.8" fill="#f5f5f5" stroke-width="1"/><rect x="485.1" y="374.3" width="2.2" height="5.8" fill="#333" stroke="none"/><rect x="492.6" y="374.3" width="2.2" height="5.8" fill="#333" stroke="none"/>
<rect x="485.1" y="387.6" width="9.7" height="5.8" fill="#f5f5f5" stroke-width="1"/><rect x="485.1" y="387.6" width="2.2" height="5.8" fill="#333" stroke="none"/><rect x="492.6" y="387.6" width="2.2" height="5.8" fill="#333" stroke="none"/>
<rect x="485.1" y="402.4" width="9.7" height="5.8" fill="#f5f5f5" stroke-width="1"/><rect x="485.1" y="402.4" width="2.2" height="5.8" fill="#333" stroke="none"/><rect x="492.6" y="402.4" width="2.2" height="5.8" fill="#333" stroke="none"/>
<rect x="485.1" y="416.4" width="9.7" height="5.8" fill="#f5f5f5" stroke-width="1"/><rect x="485.1" y="416.4" width="2.2" height="5.8" fill="#333" stroke="none"/><rect x="492.6" y="416.4" width="2.2" height="5.8" fill="#333" stroke="none"/>
</g>
<g font-family="Liberation Sans">
<text x="458.3" y="805.3" font-size="10" textLength="20.8" lengthAdjust="spacingAndGlyphs" fill="#383838">XP43</text>
<text x="456.8" y="824.53" font-size="9.8" textLength="25.8" lengthAdjust="spacingAndGlyphs" fill="#383838">LED18</text>
<text x="458.3" y="736.9" font-size="10" textLength="20.8" lengthAdjust="spacingAndGlyphs" fill="#383838">XP44</text>
<text x="456.8" y="756.13" font-size="9.8" textLength="25.8" lengthAdjust="spacingAndGlyphs" fill="#383838">LED19</text>
<text x="458.3" y="668.5" font-size="10" textLength="20.8" lengthAdjust="spacingAndGlyphs" fill="#383838">XP45</text>
<text x="456.8" y="687.73" font-size="9.8" textLength="25.8" lengthAdjust="spacingAndGlyphs" fill="#383838">LED20</text>
<text x="458.3" y="600.1" font-size="10" textLength="20.8" lengthAdjust="spacingAndGlyphs" fill="#383838">XP46</text>
<text x="456.8" y="619.33" font-size="9.8" textLength="25.8" lengthAdjust="spacingAndGlyphs" fill="#383838">LED21</text>
<text x="458.3" y="531.7" font-size="10" textLength="20.8" lengthAdjust="spacingAndGlyphs" fill="#383838">XP47</text>
<text x="456.8" y="550.93" font-size="9.8" textLength="25.8" lengthAdjust="spacingAndGlyphs" fill="#383838">LED22</text>
<text x="458.3" y="463.3" font-size="10" textLength="20.8" lengthAdjust="spacingAndGlyphs" fill="#383838">XP48</text>
<text x="456.8" y="482.53" font-size="9.8" textLength="25.8" lengthAdjust="spacingAndGlyphs" fill="#383838">LED23</text>
<text x="458.3" y="394.9" font-size="10" textLength="20.8" lengthAdjust="spacingAndGlyphs" fill="#383838">XP49</text>
<text x="456.8" y="414.13" font-size="9.8" textLength="25.8" lengthAdjust="spacingAndGlyphs" fill="#383838">LED24</text>
<text x="467.6" y="320.03" font-size="9.8" textLength="21.4" lengthAdjust="spacingAndGlyphs" fill="#383838">XP50</text>
<text x="443.6" y="347.06" font-size="9.3" textLength="25" lengthAdjust="spacingAndGlyphs" fill="#383838">LED25</text>
<text x="509.8" y="330.36" font-size="9.3" textLength="20.7" lengthAdjust="spacingAndGlyphs" fill="#383838">XP54</text>
<text x="509.8" y="341.06" font-size="9.3" textLength="20.7" lengthAdjust="spacingAndGlyphs" fill="#383838">XP53</text>
<text x="509.8" y="351.66" font-size="9.3" textLength="20.7" lengthAdjust="spacingAndGlyphs" fill="#383838">XP52</text>
<text x="509.8" y="362.36" font-size="9.3" textLength="20.7" lengthAdjust="spacingAndGlyphs" fill="#383838">XP51</text>
<text x="498.7" y="380.79" font-size="9.4" textLength="25.7" lengthAdjust="spacingAndGlyphs" fill="#383838">LED29</text>
<text x="498.7" y="394.09" font-size="9.4" textLength="25.7" lengthAdjust="spacingAndGlyphs" fill="#383838">LED28</text>
<text x="498.7" y="408.89" font-size="9.4" textLength="25.7" lengthAdjust="spacingAndGlyphs" fill="#383838">LED27</text>
<text x="498.7" y="422.89" font-size="9.4" textLength="25.7" lengthAdjust="spacingAndGlyphs" fill="#383838">LED26</text>
</g>
<g fill="none" stroke="#2a2a2a" stroke-width="1.100" font-family="Liberation Sans">
<rect x="722.5" y="275.7" width="80.9" height="539.84" fill="#f5f5f5"/>
<rect x="800.4" y="275.7" width="3.2" height="539.84" fill="#777" stroke="none"/>
<path d="M748 275.7L748 815.54" stroke-width="1.7"/>
<path d="M762.5 275.7L762.5 815.54"/>
<path d="M766.4 275.7L766.4 815.54" stroke-width="0.9"/>
<path d="M796.4 275.7L796.4 815.54"/>
<path d="M800.2 275.7L800.2 815.54"/>
<rect x="762.5" y="279" width="4.4" height="3.9" fill="#f5f5f5" stroke-width="0.9" rx="0.8"/>
<rect x="762.5" y="286.7" width="4.4" height="4.1" fill="#f5f5f5" stroke-width="0.9" rx="0.8"/>
<rect x="762.5" y="293.3" width="4.4" height="4.6" fill="#f5f5f5" stroke-width="0.9" rx="0.8"/>
<rect x="762.5" y="301.2" width="4.4" height="4.8" fill="#f5f5f5" stroke-width="0.9" rx="0.8"/>
<rect x="762.5" y="290.8" width="3.9" height="2.5" fill="#444" stroke="none"/>
<rect x="762.5" y="307.9" width="4.4" height="3.1" fill="#f5f5f5" stroke-width="0.9" rx="0.8"/>
<path d="M767.100 276.3 L769.200 277.8 H773.300 A8.400 8.400 0 0 0 773.300 292.2 A8.400 8.400 0 0 0 773.300 306.4 H769.200 L767.100 308.4" stroke-width="1"/>
<circle cx="777.6" cy="284.9" r="5.7" fill="#f5f5f5"/><path d="M775.64 279.55L782.95 286.86" stroke-width="1.1"/><path d="M773.57 280.87L781.63 288.93" stroke-width="1.1"/><path d="M772.25 282.94L779.56 290.25" stroke-width="1.1"/>
<circle cx="777.6" cy="300.1" r="5.7" fill="#f5f5f5"/><path d="M775.64 294.75L782.95 302.06" stroke-width="1.1"/><path d="M773.57 296.07L781.63 304.13" stroke-width="1.1"/><path d="M772.25 298.14L779.56 305.45" stroke-width="1.1"/>
<path d="M789.8 282.1L789.8 285.9" stroke-width="1.3" stroke="#4a4a4a"/>
<path d="M789.800 296.5 V303.3 M786.400 299.9 H793.200" stroke-width="1.300" stroke="#4a4a4a"/>
<rect x="694.8" y="276.2" width="22.4" height="10.8" fill="#f5f5f5" stroke-width="1.3" rx="4.59"/><circle cx="701.07" cy="281.6" r="1.95" fill="#222" stroke="none"/><circle cx="710.93" cy="281.6" r="1.95" fill="#222" stroke="none"/>
<rect x="681" y="278.6" width="9.6" height="6" fill="#f5f5f5" stroke-width="1"/><rect x="681" y="278.6" width="2.2" height="6" fill="#333" stroke="none"/><rect x="688.4" y="278.6" width="2.2" height="6" fill="#333" stroke="none"/>
<rect x="762.5" y="312.74" width="4.4" height="3.9" fill="#f5f5f5" stroke-width="0.9" rx="0.8"/>
<rect x="762.5" y="320.44" width="4.4" height="4.1" fill="#f5f5f5" stroke-width="0.9" rx="0.8"/>
<rect x="762.5" y="327.04" width="4.4" height="4.6" fill="#f5f5f5" stroke-width="0.9" rx="0.8"/>
<rect x="762.5" y="334.94" width="4.4" height="4.8" fill="#f5f5f5" stroke-width="0.9" rx="0.8"/>
<rect x="762.5" y="324.54" width="3.9" height="2.5" fill="#444" stroke="none"/>
<rect x="762.5" y="341.64" width="4.4" height="3.1" fill="#f5f5f5" stroke-width="0.9" rx="0.8"/>
<path d="M767.100 310.04 L769.200 311.54 H773.300 A8.400 8.400 0 0 0 773.300 325.94 A8.400 8.400 0 0 0 773.300 340.14 H769.200 L767.100 342.14" stroke-width="1"/>
<circle cx="777.6" cy="318.64" r="5.7" fill="#f5f5f5"/><path d="M775.64 313.29L782.95 320.6" stroke-width="1.1"/><path d="M773.57 314.61L781.63 322.67" stroke-width="1.1"/><path d="M772.25 316.68L779.56 323.99" stroke-width="1.1"/>
<circle cx="777.6" cy="333.84" r="5.7" fill="#f5f5f5"/><path d="M775.64 328.49L782.95 335.8" stroke-width="1.1"/><path d="M773.57 329.81L781.63 337.87" stroke-width="1.1"/><path d="M772.25 331.88L779.56 339.19" stroke-width="1.1"/>
<path d="M789.8 315.84L789.8 319.64" stroke-width="1.3" stroke="#4a4a4a"/>
<path d="M789.800 330.24 V337.04 M786.400 333.64 H793.200" stroke-width="1.300" stroke="#4a4a4a"/>
<path d="M722.5 309.44L803.4 309.44" stroke-width="1.8"/>
<rect x="694.8" y="309.94" width="22.4" height="10.8" fill="#f5f5f5" stroke-width="1.3" rx="4.59"/><circle cx="701.07" cy="315.34" r="1.95" fill="#222" stroke="none"/><circle cx="710.93" cy="315.34" r="1.95" fill="#222" stroke="none"/>
<rect x="681" y="312.34" width="9.6" height="6" fill="#f5f5f5" stroke-width="1"/><rect x="681" y="312.34" width="2.2" height="6" fill="#333" stroke="none"/><rect x="688.4" y="312.34" width="2.2" height="6" fill="#333" stroke="none"/>
<rect x="762.5" y="346.48" width="4.4" height="3.9" fill="#f5f5f5" stroke-width="0.9" rx="0.8"/>
<rect x="762.5" y="354.18" width="4.4" height="4.1" fill="#f5f5f5" stroke-width="0.9" rx="0.8"/>
<rect x="762.5" y="360.78" width="4.4" height="4.6" fill="#f5f5f5" stroke-width="0.9" rx="0.8"/>
<rect x="762.5" y="368.68" width="4.4" height="4.8" fill="#f5f5f5" stroke-width="0.9" rx="0.8"/>
<rect x="762.5" y="358.28" width="3.9" height="2.5" fill="#444" stroke="none"/>
<rect x="762.5" y="375.38" width="4.4" height="3.1" fill="#f5f5f5" stroke-width="0.9" rx="0.8"/>
<path d="M767.100 343.78 L769.200 345.28 H773.300 A8.400 8.400 0 0 0 773.300 359.68 A8.400 8.400 0 0 0 773.300 373.88 H769.200 L767.100 375.88" stroke-width="1"/>
<circle cx="777.6" cy="352.38" r="5.7" fill="#f5f5f5"/><path d="M775.64 347.03L782.95 354.34" stroke-width="1.1"/><path d="M773.57 348.35L781.63 356.41" stroke-width="1.1"/><path d="M772.25 350.42L779.56 357.73" stroke-width="1.1"/>
<circle cx="777.6" cy="367.58" r="5.7" fill="#f5f5f5"/><path d="M775.64 362.23L782.95 369.54" stroke-width="1.1"/><path d="M773.57 363.55L781.63 371.61" stroke-width="1.1"/><path d="M772.25 365.62L779.56 372.93" stroke-width="1.1"/>
<path d="M789.8 349.58L789.8 353.38" stroke-width="1.3" stroke="#4a4a4a"/>
<path d="M789.800 363.98 V370.78 M786.400 367.38 H793.200" stroke-width="1.300" stroke="#4a4a4a"/>
<path d="M722.5 343.18L803.4 343.18" stroke-width="1.8"/>
<rect x="694.8" y="343.68" width="22.4" height="10.8" fill="#f5f5f5" stroke-width="1.3" rx="4.59"/><circle cx="701.07" cy="349.08" r="1.95" fill="#222" stroke="none"/><circle cx="710.93" cy="349.08" r="1.95" fill="#222" stroke="none"/>
<rect x="681" y="346.08" width="9.6" height="6" fill="#f5f5f5" stroke-width="1"/><rect x="681" y="346.08" width="2.2" height="6" fill="#333" stroke="none"/><rect x="688.4" y="346.08" width="2.2" height="6" fill="#333" stroke="none"/>
<rect x="762.5" y="380.22" width="4.4" height="3.9" fill="#f5f5f5" stroke-width="0.9" rx="0.8"/>
<rect x="762.5" y="387.92" width="4.4" height="4.1" fill="#f5f5f5" stroke-width="0.9" rx="0.8"/>
<rect x="762.5" y="394.52" width="4.4" height="4.6" fill="#f5f5f5" stroke-width="0.9" rx="0.8"/>
<rect x="762.5" y="402.42" width="4.4" height="4.8" fill="#f5f5f5" stroke-width="0.9" rx="0.8"/>
<rect x="762.5" y="392.02" width="3.9" height="2.5" fill="#444" stroke="none"/>
<rect x="762.5" y="409.12" width="4.4" height="3.1" fill="#f5f5f5" stroke-width="0.9" rx="0.8"/>
<path d="M767.100 377.52 L769.200 379.02 H773.300 A8.400 8.400 0 0 0 773.300 393.42 A8.400 8.400 0 0 0 773.300 407.62 H769.200 L767.100 409.62" stroke-width="1"/>
<circle cx="777.6" cy="386.12" r="5.7" fill="#f5f5f5"/><path d="M775.64 380.77L782.95 388.08" stroke-width="1.1"/><path d="M773.57 382.09L781.63 390.15" stroke-width="1.1"/><path d="M772.25 384.16L779.56 391.47" stroke-width="1.1"/>
<circle cx="777.6" cy="401.32" r="5.7" fill="#f5f5f5"/><path d="M775.64 395.97L782.95 403.28" stroke-width="1.1"/><path d="M773.57 397.29L781.63 405.35" stroke-width="1.1"/><path d="M772.25 399.36L779.56 406.67" stroke-width="1.1"/>
<path d="M789.8 383.32L789.8 387.12" stroke-width="1.3" stroke="#4a4a4a"/>
<path d="M789.800 397.72 V404.52 M786.400 401.12 H793.200" stroke-width="1.300" stroke="#4a4a4a"/>
<path d="M722.5 376.92L803.4 376.92" stroke-width="1.8"/>
<rect x="694.8" y="377.42" width="22.4" height="10.8" fill="#f5f5f5" stroke-width="1.3" rx="4.59"/><circle cx="701.07" cy="382.82" r="1.95" fill="#222" stroke="none"/><circle cx="710.93" cy="382.82" r="1.95" fill="#222" stroke="none"/>
<rect x="681" y="379.82" width="9.6" height="6" fill="#f5f5f5" stroke-width="1"/><rect x="681" y="379.82" width="2.2" height="6" fill="#333" stroke="none"/><rect x="688.4" y="379.82" width="2.2" height="6" fill="#333" stroke="none"/>
<rect x="762.5" y="413.96" width="4.4" height="3.9" fill="#f5f5f5" stroke-width="0.9" rx="0.8"/>
<rect x="762.5" y="421.66" width="4.4" height="4.1" fill="#f5f5f5" stroke-width="0.9" rx="0.8"/>
<rect x="762.5" y="428.26" width="4.4" height="4.6" fill="#f5f5f5" stroke-width="0.9" rx="0.8"/>
<rect x="762.5" y="436.16" width="4.4" height="4.8" fill="#f5f5f5" stroke-width="0.9" rx="0.8"/>
<rect x="762.5" y="425.76" width="3.9" height="2.5" fill="#444" stroke="none"/>
<rect x="762.5" y="442.86" width="4.4" height="3.1" fill="#f5f5f5" stroke-width="0.9" rx="0.8"/>
<path d="M767.100 411.26 L769.200 412.76 H773.300 A8.400 8.400 0 0 0 773.300 427.16 A8.400 8.400 0 0 0 773.300 441.36 H769.200 L767.100 443.36" stroke-width="1"/>
<circle cx="777.6" cy="419.86" r="5.7" fill="#f5f5f5"/><path d="M775.64 414.51L782.95 421.82" stroke-width="1.1"/><path d="M773.57 415.83L781.63 423.89" stroke-width="1.1"/><path d="M772.25 417.9L779.56 425.21" stroke-width="1.1"/>
<circle cx="777.6" cy="435.06" r="5.7" fill="#f5f5f5"/><path d="M775.64 429.71L782.95 437.02" stroke-width="1.1"/><path d="M773.57 431.03L781.63 439.09" stroke-width="1.1"/><path d="M772.25 433.1L779.56 440.41" stroke-width="1.1"/>
<path d="M789.8 417.06L789.8 420.86" stroke-width="1.3" stroke="#4a4a4a"/>
<path d="M789.800 431.46 V438.26 M786.400 434.86 H793.200" stroke-width="1.300" stroke="#4a4a4a"/>
<path d="M722.5 410.66L803.4 410.66" stroke-width="1.8"/>
<rect x="694.8" y="411.16" width="22.4" height="10.8" fill="#f5f5f5" stroke-width="1.3" rx="4.59"/><circle cx="701.07" cy="416.56" r="1.95" fill="#222" stroke="none"/><circle cx="710.93" cy="416.56" r="1.95" fill="#222" stroke="none"/>
<rect x="681" y="413.56" width="9.6" height="6" fill="#f5f5f5" stroke-width="1"/><rect x="681" y="413.56" width="2.2" height="6" fill="#333" stroke="none"/><rect x="688.4" y="413.56" width="2.2" height="6" fill="#333" stroke="none"/>
<rect x="762.5" y="447.7" width="4.4" height="3.9" fill="#f5f5f5" stroke-width="0.9" rx="0.8"/>
<rect x="762.5" y="455.4" width="4.4" height="4.1" fill="#f5f5f5" stroke-width="0.9" rx="0.8"/>
<rect x="762.5" y="462" width="4.4" height="4.6" fill="#f5f5f5" stroke-width="0.9" rx="0.8"/>
<rect x="762.5" y="469.9" width="4.4" height="4.8" fill="#f5f5f5" stroke-width="0.9" rx="0.8"/>
<rect x="762.5" y="459.5" width="3.9" height="2.5" fill="#444" stroke="none"/>
<rect x="762.5" y="476.6" width="4.4" height="3.1" fill="#f5f5f5" stroke-width="0.9" rx="0.8"/>
<path d="M767.100 445 L769.200 446.5 H773.300 A8.400 8.400 0 0 0 773.300 460.9 A8.400 8.400 0 0 0 773.300 475.1 H769.200 L767.100 477.1" stroke-width="1"/>
<circle cx="777.6" cy="453.6" r="5.7" fill="#f5f5f5"/><path d="M775.64 448.25L782.95 455.56" stroke-width="1.1"/><path d="M773.57 449.57L781.63 457.63" stroke-width="1.1"/><path d="M772.25 451.64L779.56 458.95" stroke-width="1.1"/>
<circle cx="777.6" cy="468.8" r="5.7" fill="#f5f5f5"/><path d="M775.64 463.45L782.95 470.76" stroke-width="1.1"/><path d="M773.57 464.77L781.63 472.83" stroke-width="1.1"/><path d="M772.25 466.84L779.56 474.15" stroke-width="1.1"/>
<path d="M789.8 450.8L789.8 454.6" stroke-width="1.3" stroke="#4a4a4a"/>
<path d="M789.800 465.2 V472 M786.400 468.6 H793.200" stroke-width="1.300" stroke="#4a4a4a"/>
<path d="M722.5 444.4L803.4 444.4" stroke-width="1.8"/>
<rect x="694.8" y="444.9" width="22.4" height="10.8" fill="#f5f5f5" stroke-width="1.3" rx="4.59"/><circle cx="701.07" cy="450.3" r="1.95" fill="#222" stroke="none"/><circle cx="710.93" cy="450.3" r="1.95" fill="#222" stroke="none"/>
<rect x="681" y="447.3" width="9.6" height="6" fill="#f5f5f5" stroke-width="1"/><rect x="681" y="447.3" width="2.2" height="6" fill="#333" stroke="none"/><rect x="688.4" y="447.3" width="2.2" height="6" fill="#333" stroke="none"/>
<rect x="762.5" y="481.44" width="4.4" height="3.9" fill="#f5f5f5" stroke-width="0.9" rx="0.8"/>
<rect x="762.5" y="489.14" width="4.4" height="4.1" fill="#f5f5f5" stroke-width="0.9" rx="0.8"/>
<rect x="762.5" y="495.74" width="4.4" height="4.6" fill="#f5f5f5" stroke-width="0.9" rx="0.8"/>
<rect x="762.5" y="503.64" width="4.4" height="4.8" fill="#f5f5f5" stroke-width="0.9" rx="0.8"/>
<rect x="762.5" y="493.24" width="3.9" height="2.5" fill="#444" stroke="none"/>
<rect x="762.5" y="510.34" width="4.4" height="3.1" fill="#f5f5f5" stroke-width="0.9" rx="0.8"/>
<path d="M767.100 478.74 L769.200 480.24 H773.300 A8.400 8.400 0 0 0 773.300 494.64 A8.400 8.400 0 0 0 773.300 508.84 H769.200 L767.100 510.84" stroke-width="1"/>
<circle cx="777.6" cy="487.34" r="5.7" fill="#f5f5f5"/><path d="M775.64 481.99L782.95 489.3" stroke-width="1.1"/><path d="M773.57 483.31L781.63 491.37" stroke-width="1.1"/><path d="M772.25 485.38L779.56 492.69" stroke-width="1.1"/>
<circle cx="777.6" cy="502.54" r="5.7" fill="#f5f5f5"/><path d="M775.64 497.19L782.95 504.5" stroke-width="1.1"/><path d="M773.57 498.51L781.63 506.57" stroke-width="1.1"/><path d="M772.25 500.58L779.56 507.89" stroke-width="1.1"/>
<path d="M789.8 484.54L789.8 488.34" stroke-width="1.3" stroke="#4a4a4a"/>
<path d="M789.800 498.94 V505.74 M786.400 502.34 H793.200" stroke-width="1.300" stroke="#4a4a4a"/>
<path d="M722.5 478.14L803.4 478.14" stroke-width="1.8"/>
<rect x="694.8" y="478.64" width="22.4" height="10.8" fill="#f5f5f5" stroke-width="1.3" rx="4.59"/><circle cx="701.07" cy="484.04" r="1.95" fill="#222" stroke="none"/><circle cx="710.93" cy="484.04" r="1.95" fill="#222" stroke="none"/>
<rect x="681" y="481.04" width="9.6" height="6" fill="#f5f5f5" stroke-width="1"/><rect x="681" y="481.04" width="2.2" height="6" fill="#333" stroke="none"/><rect x="688.4" y="481.04" width="2.2" height="6" fill="#333" stroke="none"/>
<rect x="762.5" y="515.18" width="4.4" height="3.9" fill="#f5f5f5" stroke-width="0.9" rx="0.8"/>
<rect x="762.5" y="522.88" width="4.4" height="4.1" fill="#f5f5f5" stroke-width="0.9" rx="0.8"/>
<rect x="762.5" y="529.48" width="4.4" height="4.6" fill="#f5f5f5" stroke-width="0.9" rx="0.8"/>
<rect x="762.5" y="537.38" width="4.4" height="4.8" fill="#f5f5f5" stroke-width="0.9" rx="0.8"/>
<rect x="762.5" y="526.98" width="3.9" height="2.5" fill="#444" stroke="none"/>
<rect x="762.5" y="544.08" width="4.4" height="3.1" fill="#f5f5f5" stroke-width="0.9" rx="0.8"/>
<path d="M767.100 512.48 L769.200 513.98 H773.300 A8.400 8.400 0 0 0 773.300 528.38 A8.400 8.400 0 0 0 773.300 542.58 H769.200 L767.100 544.58" stroke-width="1"/>
<circle cx="777.6" cy="521.08" r="5.7" fill="#f5f5f5"/><path d="M775.64 515.73L782.95 523.04" stroke-width="1.1"/><path d="M773.57 517.05L781.63 525.11" stroke-width="1.1"/><path d="M772.25 519.12L779.56 526.43" stroke-width="1.1"/>
<circle cx="777.6" cy="536.28" r="5.7" fill="#f5f5f5"/><path d="M775.64 530.93L782.95 538.24" stroke-width="1.1"/><path d="M773.57 532.25L781.63 540.31" stroke-width="1.1"/><path d="M772.25 534.32L779.56 541.63" stroke-width="1.1"/>
<path d="M789.8 518.28L789.8 522.08" stroke-width="1.3" stroke="#4a4a4a"/>
<path d="M789.800 532.68 V539.48 M786.400 536.08 H793.200" stroke-width="1.300" stroke="#4a4a4a"/>
<path d="M722.5 511.88L803.4 511.88" stroke-width="1.8"/>
<rect x="694.8" y="512.38" width="22.4" height="10.8" fill="#f5f5f5" stroke-width="1.3" rx="4.59"/><circle cx="701.07" cy="517.78" r="1.95" fill="#222" stroke="none"/><circle cx="710.93" cy="517.78" r="1.95" fill="#222" stroke="none"/>
<rect x="681" y="514.78" width="9.6" height="6" fill="#f5f5f5" stroke-width="1"/><rect x="681" y="514.78" width="2.2" height="6" fill="#333" stroke="none"/><rect x="688.4" y="514.78" width="2.2" height="6" fill="#333" stroke="none"/>
<rect x="762.5" y="548.92" width="4.4" height="3.9" fill="#f5f5f5" stroke-width="0.9" rx="0.8"/>
<rect x="762.5" y="556.62" width="4.4" height="4.1" fill="#f5f5f5" stroke-width="0.9" rx="0.8"/>
<rect x="762.5" y="563.22" width="4.4" height="4.6" fill="#f5f5f5" stroke-width="0.9" rx="0.8"/>
<rect x="762.5" y="571.12" width="4.4" height="4.8" fill="#f5f5f5" stroke-width="0.9" rx="0.8"/>
<rect x="762.5" y="560.72" width="3.9" height="2.5" fill="#444" stroke="none"/>
<rect x="762.5" y="577.82" width="4.4" height="3.1" fill="#f5f5f5" stroke-width="0.9" rx="0.8"/>
<path d="M767.100 546.22 L769.200 547.72 H773.300 A8.400 8.400 0 0 0 773.300 562.12 A8.400 8.400 0 0 0 773.300 576.32 H769.200 L767.100 578.32" stroke-width="1"/>
<circle cx="777.6" cy="554.82" r="5.7" fill="#f5f5f5"/><path d="M775.64 549.47L782.95 556.78" stroke-width="1.1"/><path d="M773.57 550.79L781.63 558.85" stroke-width="1.1"/><path d="M772.25 552.86L779.56 560.17" stroke-width="1.1"/>
<circle cx="777.6" cy="570.02" r="5.7" fill="#f5f5f5"/><path d="M775.64 564.67L782.95 571.98" stroke-width="1.1"/><path d="M773.57 565.99L781.63 574.05" stroke-width="1.1"/><path d="M772.25 568.06L779.56 575.37" stroke-width="1.1"/>
<path d="M789.8 552.02L789.8 555.82" stroke-width="1.3" stroke="#4a4a4a"/>
<path d="M789.800 566.42 V573.22 M786.400 569.82 H793.200" stroke-width="1.300" stroke="#4a4a4a"/>
<path d="M722.5 545.62L803.4 545.62" stroke-width="1.8"/>
<rect x="694.8" y="546.12" width="22.4" height="10.8" fill="#f5f5f5" stroke-width="1.3" rx="4.59"/><circle cx="701.07" cy="551.52" r="1.95" fill="#222" stroke="none"/><circle cx="710.93" cy="551.52" r="1.95" fill="#222" stroke="none"/>
<rect x="681" y="548.52" width="9.6" height="6" fill="#f5f5f5" stroke-width="1"/><rect x="681" y="548.52" width="2.2" height="6" fill="#333" stroke="none"/><rect x="688.4" y="548.52" width="2.2" height="6" fill="#333" stroke="none"/>
<rect x="762.5" y="582.66" width="4.4" height="3.9" fill="#f5f5f5" stroke-width="0.9" rx="0.8"/>
<rect x="762.5" y="590.36" width="4.4" height="4.1" fill="#f5f5f5" stroke-width="0.9" rx="0.8"/>
<rect x="762.5" y="596.96" width="4.4" height="4.6" fill="#f5f5f5" stroke-width="0.9" rx="0.8"/>
<rect x="762.5" y="604.86" width="4.4" height="4.8" fill="#f5f5f5" stroke-width="0.9" rx="0.8"/>
<rect x="762.5" y="594.46" width="3.9" height="2.5" fill="#444" stroke="none"/>
<rect x="762.5" y="611.56" width="4.4" height="3.1" fill="#f5f5f5" stroke-width="0.9" rx="0.8"/>
<path d="M767.100 579.96 L769.200 581.46 H773.300 A8.400 8.400 0 0 0 773.300 595.86 A8.400 8.400 0 0 0 773.300 610.06 H769.200 L767.100 612.06" stroke-width="1"/>
<circle cx="777.6" cy="588.56" r="5.7" fill="#f5f5f5"/><path d="M775.64 583.21L782.95 590.52" stroke-width="1.1"/><path d="M773.57 584.53L781.63 592.59" stroke-width="1.1"/><path d="M772.25 586.6L779.56 593.91" stroke-width="1.1"/>
<circle cx="777.6" cy="603.76" r="5.7" fill="#f5f5f5"/><path d="M775.64 598.41L782.95 605.72" stroke-width="1.1"/><path d="M773.57 599.73L781.63 607.79" stroke-width="1.1"/><path d="M772.25 601.8L779.56 609.11" stroke-width="1.1"/>
<path d="M789.8 585.76L789.8 589.56" stroke-width="1.3" stroke="#4a4a4a"/>
<path d="M789.800 600.16 V606.96 M786.400 603.56 H793.200" stroke-width="1.300" stroke="#4a4a4a"/>
<path d="M722.5 579.36L803.4 579.36" stroke-width="1.8"/>
<rect x="694.8" y="579.86" width="22.4" height="10.8" fill="#f5f5f5" stroke-width="1.3" rx="4.59"/><circle cx="701.07" cy="585.26" r="1.95" fill="#222" stroke="none"/><circle cx="710.93" cy="585.26" r="1.95" fill="#222" stroke="none"/>
<rect x="681" y="582.26" width="9.6" height="6" fill="#f5f5f5" stroke-width="1"/><rect x="681" y="582.26" width="2.2" height="6" fill="#333" stroke="none"/><rect x="688.4" y="582.26" width="2.2" height="6" fill="#333" stroke="none"/>
<rect x="762.5" y="616.4" width="4.4" height="3.9" fill="#f5f5f5" stroke-width="0.9" rx="0.8"/>
<rect x="762.5" y="624.1" width="4.4" height="4.1" fill="#f5f5f5" stroke-width="0.9" rx="0.8"/>
<rect x="762.5" y="630.7" width="4.4" height="4.6" fill="#f5f5f5" stroke-width="0.9" rx="0.8"/>
<rect x="762.5" y="638.6" width="4.4" height="4.8" fill="#f5f5f5" stroke-width="0.9" rx="0.8"/>
<rect x="762.5" y="628.2" width="3.9" height="2.5" fill="#444" stroke="none"/>
<rect x="762.5" y="645.3" width="4.4" height="3.1" fill="#f5f5f5" stroke-width="0.9" rx="0.8"/>
<path d="M767.100 613.7 L769.200 615.2 H773.300 A8.400 8.400 0 0 0 773.300 629.6 A8.400 8.400 0 0 0 773.300 643.8 H769.200 L767.100 645.8" stroke-width="1"/>
<circle cx="777.6" cy="622.3" r="5.7" fill="#f5f5f5"/><path d="M775.64 616.95L782.95 624.26" stroke-width="1.1"/><path d="M773.57 618.27L781.63 626.33" stroke-width="1.1"/><path d="M772.25 620.34L779.56 627.65" stroke-width="1.1"/>
<circle cx="777.6" cy="637.5" r="5.7" fill="#f5f5f5"/><path d="M775.64 632.15L782.95 639.46" stroke-width="1.1"/><path d="M773.57 633.47L781.63 641.53" stroke-width="1.1"/><path d="M772.25 635.54L779.56 642.85" stroke-width="1.1"/>
<path d="M789.8 619.5L789.8 623.3" stroke-width="1.3" stroke="#4a4a4a"/>
<path d="M789.800 633.9 V640.7 M786.400 637.3 H793.200" stroke-width="1.300" stroke="#4a4a4a"/>
<path d="M722.5 613.1L803.4 613.1" stroke-width="1.8"/>
<rect x="694.8" y="613.6" width="22.4" height="10.8" fill="#f5f5f5" stroke-width="1.3" rx="4.59"/><circle cx="701.07" cy="619" r="1.95" fill="#222" stroke="none"/><circle cx="710.93" cy="619" r="1.95" fill="#222" stroke="none"/>
<rect x="681" y="616" width="9.6" height="6" fill="#f5f5f5" stroke-width="1"/><rect x="681" y="616" width="2.2" height="6" fill="#333" stroke="none"/><rect x="688.4" y="616" width="2.2" height="6" fill="#333" stroke="none"/>
<rect x="762.5" y="650.14" width="4.4" height="3.9" fill="#f5f5f5" stroke-width="0.9" rx="0.8"/>
<rect x="762.5" y="657.84" width="4.4" height="4.1" fill="#f5f5f5" stroke-width="0.9" rx="0.8"/>
<rect x="762.5" y="664.44" width="4.4" height="4.6" fill="#f5f5f5" stroke-width="0.9" rx="0.8"/>
<rect x="762.5" y="672.34" width="4.4" height="4.8" fill="#f5f5f5" stroke-width="0.9" rx="0.8"/>
<rect x="762.5" y="661.94" width="3.9" height="2.5" fill="#444" stroke="none"/>
<rect x="762.5" y="679.04" width="4.4" height="3.1" fill="#f5f5f5" stroke-width="0.9" rx="0.8"/>
<path d="M767.100 647.44 L769.200 648.94 H773.300 A8.400 8.400 0 0 0 773.300 663.34 A8.400 8.400 0 0 0 773.300 677.54 H769.200 L767.100 679.54" stroke-width="1"/>
<circle cx="777.6" cy="656.04" r="5.7" fill="#f5f5f5"/><path d="M775.64 650.69L782.95 658" stroke-width="1.1"/><path d="M773.57 652.01L781.63 660.07" stroke-width="1.1"/><path d="M772.25 654.08L779.56 661.39" stroke-width="1.1"/>
<circle cx="777.6" cy="671.24" r="5.7" fill="#f5f5f5"/><path d="M775.64 665.89L782.95 673.2" stroke-width="1.1"/><path d="M773.57 667.21L781.63 675.27" stroke-width="1.1"/><path d="M772.25 669.28L779.56 676.59" stroke-width="1.1"/>
<path d="M789.8 653.24L789.8 657.04" stroke-width="1.3" stroke="#4a4a4a"/>
<path d="M789.800 667.64 V674.44 M786.400 671.04 H793.200" stroke-width="1.300" stroke="#4a4a4a"/>
<path d="M722.5 646.84L803.4 646.84" stroke-width="1.8"/>
<rect x="694.8" y="647.34" width="22.4" height="10.8" fill="#f5f5f5" stroke-width="1.3" rx="4.59"/><circle cx="701.07" cy="652.74" r="1.95" fill="#222" stroke="none"/><circle cx="710.93" cy="652.74" r="1.95" fill="#222" stroke="none"/>
<rect x="681" y="649.74" width="9.6" height="6" fill="#f5f5f5" stroke-width="1"/><rect x="681" y="649.74" width="2.2" height="6" fill="#333" stroke="none"/><rect x="688.4" y="649.74" width="2.2" height="6" fill="#333" stroke="none"/>
<rect x="762.5" y="683.88" width="4.4" height="3.9" fill="#f5f5f5" stroke-width="0.9" rx="0.8"/>
<rect x="762.5" y="691.58" width="4.4" height="4.1" fill="#f5f5f5" stroke-width="0.9" rx="0.8"/>
<rect x="762.5" y="698.18" width="4.4" height="4.6" fill="#f5f5f5" stroke-width="0.9" rx="0.8"/>
<rect x="762.5" y="706.08" width="4.4" height="4.8" fill="#f5f5f5" stroke-width="0.9" rx="0.8"/>
<rect x="762.5" y="695.68" width="3.9" height="2.5" fill="#444" stroke="none"/>
<rect x="762.5" y="712.78" width="4.4" height="3.1" fill="#f5f5f5" stroke-width="0.9" rx="0.8"/>
<path d="M767.100 681.18 L769.200 682.68 H773.300 A8.400 8.400 0 0 0 773.300 697.08 A8.400 8.400 0 0 0 773.300 711.28 H769.200 L767.100 713.28" stroke-width="1"/>
<circle cx="777.6" cy="689.78" r="5.7" fill="#f5f5f5"/><path d="M775.64 684.43L782.95 691.74" stroke-width="1.1"/><path d="M773.57 685.75L781.63 693.81" stroke-width="1.1"/><path d="M772.25 687.82L779.56 695.13" stroke-width="1.1"/>
<circle cx="777.6" cy="704.98" r="5.7" fill="#f5f5f5"/><path d="M775.64 699.63L782.95 706.94" stroke-width="1.1"/><path d="M773.57 700.95L781.63 709.01" stroke-width="1.1"/><path d="M772.25 703.02L779.56 710.33" stroke-width="1.1"/>
<path d="M789.8 686.98L789.8 690.78" stroke-width="1.3" stroke="#4a4a4a"/>
<path d="M789.800 701.38 V708.18 M786.400 704.78 H793.200" stroke-width="1.300" stroke="#4a4a4a"/>
<path d="M722.5 680.58L803.4 680.58" stroke-width="1.8"/>
<rect x="694.8" y="681.08" width="22.4" height="10.8" fill="#f5f5f5" stroke-width="1.3" rx="4.59"/><circle cx="701.07" cy="686.48" r="1.95" fill="#222" stroke="none"/><circle cx="710.93" cy="686.48" r="1.95" fill="#222" stroke="none"/>
<rect x="681" y="683.48" width="9.6" height="6" fill="#f5f5f5" stroke-width="1"/><rect x="681" y="683.48" width="2.2" height="6" fill="#333" stroke="none"/><rect x="688.4" y="683.48" width="2.2" height="6" fill="#333" stroke="none"/>
<rect x="762.5" y="717.62" width="4.4" height="3.9" fill="#f5f5f5" stroke-width="0.9" rx="0.8"/>
<rect x="762.5" y="725.32" width="4.4" height="4.1" fill="#f5f5f5" stroke-width="0.9" rx="0.8"/>
<rect x="762.5" y="731.92" width="4.4" height="4.6" fill="#f5f5f5" stroke-width="0.9" rx="0.8"/>
<rect x="762.5" y="739.82" width="4.4" height="4.8" fill="#f5f5f5" stroke-width="0.9" rx="0.8"/>
<rect x="762.5" y="729.42" width="3.9" height="2.5" fill="#444" stroke="none"/>
<rect x="762.5" y="746.52" width="4.4" height="3.1" fill="#f5f5f5" stroke-width="0.9" rx="0.8"/>
<path d="M767.100 714.92 L769.200 716.42 H773.300 A8.400 8.400 0 0 0 773.300 730.82 A8.400 8.400 0 0 0 773.300 745.02 H769.200 L767.100 747.02" stroke-width="1"/>
<circle cx="777.6" cy="723.52" r="5.7" fill="#f5f5f5"/><path d="M775.64 718.17L782.95 725.48" stroke-width="1.1"/><path d="M773.57 719.49L781.63 727.55" stroke-width="1.1"/><path d="M772.25 721.56L779.56 728.87" stroke-width="1.1"/>
<circle cx="777.6" cy="738.72" r="5.7" fill="#f5f5f5"/><path d="M775.64 733.37L782.95 740.68" stroke-width="1.1"/><path d="M773.57 734.69L781.63 742.75" stroke-width="1.1"/><path d="M772.25 736.76L779.56 744.07" stroke-width="1.1"/>
<path d="M789.8 720.72L789.8 724.52" stroke-width="1.3" stroke="#4a4a4a"/>
<path d="M789.800 735.12 V741.92 M786.400 738.52 H793.200" stroke-width="1.300" stroke="#4a4a4a"/>
<path d="M722.5 714.32L803.4 714.32" stroke-width="1.8"/>
<rect x="694.8" y="714.82" width="22.4" height="10.8" fill="#f5f5f5" stroke-width="1.3" rx="4.59"/><circle cx="701.07" cy="720.22" r="1.95" fill="#222" stroke="none"/><circle cx="710.93" cy="720.22" r="1.95" fill="#222" stroke="none"/>
<rect x="681" y="717.22" width="9.6" height="6" fill="#f5f5f5" stroke-width="1"/><rect x="681" y="717.22" width="2.2" height="6" fill="#333" stroke="none"/><rect x="688.4" y="717.22" width="2.2" height="6" fill="#333" stroke="none"/>
<rect x="762.5" y="751.36" width="4.4" height="3.9" fill="#f5f5f5" stroke-width="0.9" rx="0.8"/>
<rect x="762.5" y="759.06" width="4.4" height="4.1" fill="#f5f5f5" stroke-width="0.9" rx="0.8"/>
<rect x="762.5" y="765.66" width="4.4" height="4.6" fill="#f5f5f5" stroke-width="0.9" rx="0.8"/>
<rect x="762.5" y="773.56" width="4.4" height="4.8" fill="#f5f5f5" stroke-width="0.9" rx="0.8"/>
<rect x="762.5" y="763.16" width="3.9" height="2.5" fill="#444" stroke="none"/>
<rect x="762.5" y="780.26" width="4.4" height="3.1" fill="#f5f5f5" stroke-width="0.9" rx="0.8"/>
<path d="M767.100 748.66 L769.200 750.16 H773.300 A8.400 8.400 0 0 0 773.300 764.56 A8.400 8.400 0 0 0 773.300 778.76 H769.200 L767.100 780.76" stroke-width="1"/>
<circle cx="777.6" cy="757.26" r="5.7" fill="#f5f5f5"/><path d="M775.64 751.91L782.95 759.22" stroke-width="1.1"/><path d="M773.57 753.23L781.63 761.29" stroke-width="1.1"/><path d="M772.25 755.3L779.56 762.61" stroke-width="1.1"/>
<circle cx="777.6" cy="772.46" r="5.7" fill="#f5f5f5"/><path d="M775.64 767.11L782.95 774.42" stroke-width="1.1"/><path d="M773.57 768.43L781.63 776.49" stroke-width="1.1"/><path d="M772.25 770.5L779.56 777.81" stroke-width="1.1"/>
<path d="M789.8 754.46L789.8 758.26" stroke-width="1.3" stroke="#4a4a4a"/>
<path d="M789.800 768.86 V775.66 M786.400 772.26 H793.200" stroke-width="1.300" stroke="#4a4a4a"/>
<path d="M722.5 748.06L803.4 748.06" stroke-width="1.8"/>
<rect x="694.8" y="748.56" width="22.4" height="10.8" fill="#f5f5f5" stroke-width="1.3" rx="4.59"/><circle cx="701.07" cy="753.96" r="1.95" fill="#222" stroke="none"/><circle cx="710.93" cy="753.96" r="1.95" fill="#222" stroke="none"/>
<rect x="681" y="750.96" width="9.6" height="6" fill="#f5f5f5" stroke-width="1"/><rect x="681" y="750.96" width="2.2" height="6" fill="#333" stroke="none"/><rect x="688.4" y="750.96" width="2.2" height="6" fill="#333" stroke="none"/>
<rect x="762.5" y="785.1" width="4.4" height="3.9" fill="#f5f5f5" stroke-width="0.9" rx="0.8"/>
<rect x="762.5" y="792.8" width="4.4" height="4.1" fill="#f5f5f5" stroke-width="0.9" rx="0.8"/>
<rect x="762.5" y="799.4" width="4.4" height="4.6" fill="#f5f5f5" stroke-width="0.9" rx="0.8"/>
<rect x="762.5" y="807.3" width="4.4" height="4.8" fill="#f5f5f5" stroke-width="0.9" rx="0.8"/>
<rect x="762.5" y="796.9" width="3.9" height="2.5" fill="#444" stroke="none"/>
<path d="M767.100 782.4 L769.200 783.9 H773.300 A8.400 8.400 0 0 0 773.300 798.3 A8.400 8.400 0 0 0 773.300 812.5 H769.200 L767.100 814.5" stroke-width="1"/>
<circle cx="777.6" cy="791" r="5.7" fill="#f5f5f5"/><path d="M775.64 785.65L782.95 792.96" stroke-width="1.1"/><path d="M773.57 786.97L781.63 795.03" stroke-width="1.1"/><path d="M772.25 789.04L779.56 796.35" stroke-width="1.1"/>
<circle cx="777.6" cy="806.2" r="5.7" fill="#f5f5f5"/><path d="M775.64 800.85L782.95 808.16" stroke-width="1.1"/><path d="M773.57 802.17L781.63 810.23" stroke-width="1.1"/><path d="M772.25 804.24L779.56 811.55" stroke-width="1.1"/>
<path d="M789.8 788.2L789.8 792" stroke-width="1.3" stroke="#4a4a4a"/>
<path d="M789.800 802.6 V809.4 M786.400 806 H793.200" stroke-width="1.300" stroke="#4a4a4a"/>
<path d="M722.5 781.8L803.4 781.8" stroke-width="1.8"/>
<rect x="694.8" y="782.3" width="22.4" height="10.8" fill="#f5f5f5" stroke-width="1.3" rx="4.59"/><circle cx="701.07" cy="787.7" r="1.95" fill="#222" stroke="none"/><circle cx="710.93" cy="787.7" r="1.95" fill="#222" stroke="none"/>
<rect x="681" y="784.7" width="9.6" height="6" fill="#f5f5f5" stroke-width="1"/><rect x="681" y="784.7" width="2.2" height="6" fill="#333" stroke="none"/><rect x="688.4" y="784.7" width="2.2" height="6" fill="#333" stroke="none"/>
</g>
<g font-family="Liberation Sans">
<text transform="translate(740.06 305.22) rotate(-90)" font-size="13.6" textLength="25.3" lengthAdjust="spacingAndGlyphs" fill="#383838">XP16</text>
<text transform="translate(705.17 301.75) rotate(-90)" font-size="10.2" textLength="11.7" lengthAdjust="spacingAndGlyphs" fill="#383838">XP</text>
<text transform="translate(715.87 301.75) rotate(-90)" font-size="10.2" textLength="11.7" lengthAdjust="spacingAndGlyphs" fill="#383838">32</text>
<text x="651.1" y="285.33" font-size="9.8" textLength="26" lengthAdjust="spacingAndGlyphs" fill="#383838">LED16</text>
<text transform="translate(740.06 338.96) rotate(-90)" font-size="13.6" textLength="25.3" lengthAdjust="spacingAndGlyphs" fill="#383838">XP15</text>
<text transform="translate(705.17 335.49) rotate(-90)" font-size="10.2" textLength="11.7" lengthAdjust="spacingAndGlyphs" fill="#383838">XP</text>
<text transform="translate(715.87 335.04) rotate(-90)" font-size="10.2" textLength="10.8" lengthAdjust="spacingAndGlyphs" fill="#383838">31</text>
<text x="651.1" y="319.07" font-size="9.8" textLength="26" lengthAdjust="spacingAndGlyphs" fill="#383838">LED15</text>
<text transform="translate(740.06 372.7) rotate(-90)" font-size="13.6" textLength="25.3" lengthAdjust="spacingAndGlyphs" fill="#383838">XP14</text>
<text transform="translate(705.17 369.23) rotate(-90)" font-size="10.2" textLength="11.7" lengthAdjust="spacingAndGlyphs" fill="#383838">XP</text>
<text transform="translate(715.87 369.23) rotate(-90)" font-size="10.2" textLength="11.7" lengthAdjust="spacingAndGlyphs" fill="#383838">30</text>
<text x="651.1" y="352.81" font-size="9.8" textLength="26" lengthAdjust="spacingAndGlyphs" fill="#383838">LED14</text>
<text transform="translate(740.06 406.44) rotate(-90)" font-size="13.6" textLength="25.3" lengthAdjust="spacingAndGlyphs" fill="#383838">XP13</text>
<text transform="translate(705.17 402.97) rotate(-90)" font-size="10.2" textLength="11.7" lengthAdjust="spacingAndGlyphs" fill="#383838">XP</text>
<text transform="translate(715.87 402.97) rotate(-90)" font-size="10.2" textLength="11.7" lengthAdjust="spacingAndGlyphs" fill="#383838">29</text>
<text x="651.1" y="386.55" font-size="9.8" textLength="26" lengthAdjust="spacingAndGlyphs" fill="#383838">LED13</text>
<text transform="translate(740.06 440.18) rotate(-90)" font-size="13.6" textLength="25.3" lengthAdjust="spacingAndGlyphs" fill="#383838">XP12</text>
<text transform="translate(705.17 436.71) rotate(-90)" font-size="10.2" textLength="11.7" lengthAdjust="spacingAndGlyphs" fill="#383838">XP</text>
<text transform="translate(715.87 436.71) rotate(-90)" font-size="10.2" textLength="11.7" lengthAdjust="spacingAndGlyphs" fill="#383838">28</text>
<text x="651.1" y="420.29" font-size="9.8" textLength="26" lengthAdjust="spacingAndGlyphs" fill="#383838">LED12</text>
<text transform="translate(740.06 472.77) rotate(-90)" font-size="13.6" textLength="23" lengthAdjust="spacingAndGlyphs" fill="#383838">XP11</text>
<text transform="translate(705.17 470.45) rotate(-90)" font-size="10.2" textLength="11.7" lengthAdjust="spacingAndGlyphs" fill="#383838">XP</text>
<text transform="translate(715.87 470.45) rotate(-90)" font-size="10.2" textLength="11.7" lengthAdjust="spacingAndGlyphs" fill="#383838">27</text>
<text x="651.1" y="454.03" font-size="9.8" textLength="26" lengthAdjust="spacingAndGlyphs" fill="#383838">LED11</text>
<text transform="translate(740.06 507.66) rotate(-90)" font-size="13.6" textLength="25.3" lengthAdjust="spacingAndGlyphs" fill="#383838">XP10</text>
<text transform="translate(705.17 504.19) rotate(-90)" font-size="10.2" textLength="11.7" lengthAdjust="spacingAndGlyphs" fill="#383838">XP</text>
<text transform="translate(715.87 504.19) rotate(-90)" font-size="10.2" textLength="11.7" lengthAdjust="spacingAndGlyphs" fill="#383838">26</text>
<text x="651.1" y="487.77" font-size="9.8" textLength="26" lengthAdjust="spacingAndGlyphs" fill="#383838">LED10</text>
<text transform="translate(740.06 540.65) rotate(-90)" font-size="13.6" textLength="23.8" lengthAdjust="spacingAndGlyphs" fill="#383838">XP 9</text>
<text transform="translate(705.17 537.93) rotate(-90)" font-size="10.2" textLength="11.7" lengthAdjust="spacingAndGlyphs" fill="#383838">XP</text>
<text transform="translate(715.87 537.93) rotate(-90)" font-size="10.2" textLength="11.7" lengthAdjust="spacingAndGlyphs" fill="#383838">25</text>
<text x="651.1" y="521.51" font-size="9.8" textLength="21.2" lengthAdjust="spacingAndGlyphs" fill="#383838">LED9</text>
<text transform="translate(740.06 574.39) rotate(-90)" font-size="13.6" textLength="23.8" lengthAdjust="spacingAndGlyphs" fill="#383838">XP 8</text>
<text transform="translate(705.17 571.67) rotate(-90)" font-size="10.2" textLength="11.7" lengthAdjust="spacingAndGlyphs" fill="#383838">XP</text>
<text transform="translate(715.87 571.67) rotate(-90)" font-size="10.2" textLength="11.7" lengthAdjust="spacingAndGlyphs" fill="#383838">24</text>
<text x="651.1" y="555.25" font-size="9.8" textLength="21.2" lengthAdjust="spacingAndGlyphs" fill="#383838">LED8</text>
<text transform="translate(740.06 608.13) rotate(-90)" font-size="13.6" textLength="23.8" lengthAdjust="spacingAndGlyphs" fill="#383838">XP 7</text>
<text transform="translate(705.17 605.41) rotate(-90)" font-size="10.2" textLength="11.7" lengthAdjust="spacingAndGlyphs" fill="#383838">XP</text>
<text transform="translate(715.87 605.41) rotate(-90)" font-size="10.2" textLength="11.7" lengthAdjust="spacingAndGlyphs" fill="#383838">23</text>
<text x="651.1" y="588.99" font-size="9.8" textLength="21.2" lengthAdjust="spacingAndGlyphs" fill="#383838">LED7</text>
<text transform="translate(740.06 641.87) rotate(-90)" font-size="13.6" textLength="23.8" lengthAdjust="spacingAndGlyphs" fill="#383838">XP 6</text>
<text transform="translate(705.17 639.15) rotate(-90)" font-size="10.2" textLength="11.7" lengthAdjust="spacingAndGlyphs" fill="#383838">XP</text>
<text transform="translate(715.87 639.15) rotate(-90)" font-size="10.2" textLength="11.7" lengthAdjust="spacingAndGlyphs" fill="#383838">22</text>
<text x="651.1" y="622.73" font-size="9.8" textLength="21.2" lengthAdjust="spacingAndGlyphs" fill="#383838">LED6</text>
<text transform="translate(740.06 675.61) rotate(-90)" font-size="13.6" textLength="23.8" lengthAdjust="spacingAndGlyphs" fill="#383838">XP 5</text>
<text transform="translate(705.17 672.89) rotate(-90)" font-size="10.2" textLength="11.7" lengthAdjust="spacingAndGlyphs" fill="#383838">XP</text>
<text transform="translate(715.87 672.44) rotate(-90)" font-size="10.2" textLength="10.8" lengthAdjust="spacingAndGlyphs" fill="#383838">21</text>
<text x="651.1" y="656.47" font-size="9.8" textLength="21.2" lengthAdjust="spacingAndGlyphs" fill="#383838">LED5</text>
<text transform="translate(740.06 709.35) rotate(-90)" font-size="13.6" textLength="23.8" lengthAdjust="spacingAndGlyphs" fill="#383838">XP 4</text>
<text transform="translate(705.17 706.63) rotate(-90)" font-size="10.2" textLength="11.7" lengthAdjust="spacingAndGlyphs" fill="#383838">XP</text>
<text transform="translate(715.87 706.63) rotate(-90)" font-size="10.2" textLength="11.7" lengthAdjust="spacingAndGlyphs" fill="#383838">20</text>
<text x="651.1" y="690.21" font-size="9.8" textLength="21.2" lengthAdjust="spacingAndGlyphs" fill="#383838">LED4</text>
<text transform="translate(740.06 743.09) rotate(-90)" font-size="13.6" textLength="23.8" lengthAdjust="spacingAndGlyphs" fill="#383838">XP 3</text>
<text transform="translate(705.17 740.37) rotate(-90)" font-size="10.2" textLength="11.7" lengthAdjust="spacingAndGlyphs" fill="#383838">XP</text>
<text transform="translate(715.87 739.92) rotate(-90)" font-size="10.2" textLength="10.8" lengthAdjust="spacingAndGlyphs" fill="#383838">19</text>
<text x="651.1" y="723.95" font-size="9.8" textLength="21.2" lengthAdjust="spacingAndGlyphs" fill="#383838">LED3</text>
<text transform="translate(740.06 776.83) rotate(-90)" font-size="13.6" textLength="23.8" lengthAdjust="spacingAndGlyphs" fill="#383838">XP 2</text>
<text transform="translate(705.17 774.11) rotate(-90)" font-size="10.2" textLength="11.7" lengthAdjust="spacingAndGlyphs" fill="#383838">XP</text>
<text transform="translate(715.87 773.66) rotate(-90)" font-size="10.2" textLength="10.8" lengthAdjust="spacingAndGlyphs" fill="#383838">18</text>
<text x="651.1" y="757.69" font-size="9.8" textLength="21.2" lengthAdjust="spacingAndGlyphs" fill="#383838">LED2</text>
<text transform="translate(740.06 810.57) rotate(-90)" font-size="13.6" textLength="23.8" lengthAdjust="spacingAndGlyphs" fill="#383838">XP 1</text>
<text transform="translate(705.17 807.85) rotate(-90)" font-size="10.2" textLength="11.7" lengthAdjust="spacingAndGlyphs" fill="#383838">XP</text>
<text transform="translate(715.87 807.4) rotate(-90)" font-size="10.2" textLength="10.8" lengthAdjust="spacingAndGlyphs" fill="#383838">17</text>
<text x="651.1" y="791.43" font-size="9.8" textLength="21.2" lengthAdjust="spacingAndGlyphs" fill="#383838">LED1</text>
</g>
<g fill="none" stroke="#2a2a2a" stroke-width="1.100" font-family="Liberation Sans">
<rect x="461.2" y="870" width="33.5" height="25.2" fill="#f5f5f5"/><path d="M461.2 895.2L494.7 895.2" stroke-width="1.8"/><rect x="461.2" y="895.2" width="33.5" height="14" fill="#f5f5f5"/><rect x="461.2" y="914.2" width="33.5" height="36.6" fill="#f5f5f5"/><path d="M461.2 943.8L494.7 943.8"/><path d="M461.2 947.1L494.7 947.1"/><rect x="462.9" y="909.4" width="5.4" height="4.6" stroke-width="0.9"/><rect x="471.7" y="909.4" width="5.4" height="4.6" stroke-width="0.9"/><rect x="478.6" y="909.4" width="5.4" height="4.6" stroke-width="0.9"/><rect x="487.4" y="909.4" width="5.4" height="4.6" stroke-width="0.9"/><path d="M461.8 915.200 L463.1 920.6 A8.2 7.3 0 0 1 477.85 921.4 A8.2 7.3 0 0 1 492.6 920.6 L494.1 915.200" stroke-width="0.900"/><path d="M461.8 915.200 L464.3 921.32 A7 6.1 0 0 1 477.85 922 A7 6.1 0 0 1 491.4 921.32 L494.1 915.200" stroke-width="0.900"/><circle cx="470" cy="924.7" r="5.3" fill="#f5f5f5"/><path d="M465.7 927.1 L472.4 920.4 M467.6 929 L474.3 922.3" stroke-width="1.200"/><circle cx="485.7" cy="924.7" r="5.3" fill="#f5f5f5"/><path d="M481.4 927.1 L488.1 920.4 M483.3 929 L490 922.3" stroke-width="1.200"/>
<path d="M466.200 884.500 H473.200 M469.700 881 V888 M487 882.300 V886.700" stroke-width="1.100"/>
<rect x="501.4" y="880.4" width="10.2" height="6.2" fill="#f5f5f5" stroke-width="1"/><rect x="501.4" y="880.4" width="2.2" height="6.2" fill="#333" stroke="none"/><rect x="509.4" y="880.4" width="2.2" height="6.2" fill="#333" stroke="none"/>
<path d="M518.400 835.200 H567 V907.700 H518.400Z" fill="#f5f5f5" stroke="#555" stroke-width="1"/>
<path d="M517.800 836.500 V835 H526.500 L527.800 836.200 M567.600 836.500 V835 H559 L557.700 836.200 M518.400 896.500 H516.900 V905.500 L519 907.700 H566.400 L568.500 905.500 V896.500 H567" stroke-width="1.300"/>
<path d="M518.400 903.500 L520.800 905.800 M567 903.500 L564.600 905.800" stroke-width="0.900"/>
<path d="M573.700 875 Q569 891 573.700 907.600Z M643.200 875 Q648 891 643.200 907.600Z" fill="#222"/>
<rect x="574.1" y="817.2" width="68.8" height="90.6" fill="#f5f5f5"/>
<path d="M592.7 876.2L592.7 907.8"/>
<path d="M601.2 876.2L601.2 907.8"/>
<path d="M615.4 876.2L615.4 907.8"/>
<path d="M623.8 876.2L623.8 907.8"/>
<rect x="677.6" y="869.8" width="48.6" height="25.4" fill="#f5f5f5"/><path d="M677.6 895.2L726.2 895.2" stroke-width="1.8"/><rect x="677.6" y="895.2" width="48.6" height="14" fill="#f5f5f5"/><rect x="677.6" y="914.2" width="48.6" height="36.6" fill="#f5f5f5"/><path d="M677.6 943.8L726.2 943.8"/><path d="M677.6 947.1L726.2 947.1"/><rect x="679.6" y="909.4" width="5.4" height="4.6" stroke-width="0.9"/><rect x="688.4" y="909.4" width="5.4" height="4.6" stroke-width="0.9"/><rect x="694.6" y="909.4" width="5.4" height="4.6" stroke-width="0.9"/><rect x="703.4" y="909.4" width="5.4" height="4.6" stroke-width="0.9"/><rect x="709.6" y="909.4" width="5.4" height="4.6" stroke-width="0.9"/><rect x="718.4" y="909.4" width="5.4" height="4.6" stroke-width="0.9"/><path d="M678.2 915.200 L679.8 920.6 A8.2 7.3 0 0 1 694.2 921.4 A8.2 7.3 0 0 1 709.2 921.4 A8.2 7.3 0 0 1 723.6 920.6 L725.6 915.200" stroke-width="0.900"/><path d="M678.2 915.200 L681 921.32 A7 6.1 0 0 1 694.2 922 A7 6.1 0 0 1 709.2 922 A7 6.1 0 0 1 722.4 921.32 L725.6 915.200" stroke-width="0.900"/><circle cx="686.7" cy="924.7" r="5.3" fill="#f5f5f5"/><path d="M682.4 927.1 L689.1 920.4 M684.3 929 L691 922.3" stroke-width="1.200"/><circle cx="701.7" cy="924.7" r="5.3" fill="#f5f5f5"/><path d="M697.4 927.1 L704.1 920.4 M699.3 929 L706 922.3" stroke-width="1.200"/><circle cx="716.7" cy="924.7" r="5.3" fill="#f5f5f5"/><path d="M712.4 927.1 L719.1 920.4 M714.3 929 L721 922.3" stroke-width="1.200"/>
</g>
<g font-family="Liberation Sans">
<text transform="translate(528.62 301.05) rotate(-90)" font-size="17.2" textLength="24.7" lengthAdjust="spacingAndGlyphs" fill="#383838">XS3</text>
<text transform="translate(451.6 946.65) rotate(-90)" font-size="16.3" textLength="32.5" lengthAdjust="spacingAndGlyphs" fill="#383838">XP33</text>
<text transform="translate(512.22 874.65) rotate(-90)" font-size="13.2" textLength="33.9" lengthAdjust="spacingAndGlyphs" fill="#383838">LED17</text>
<text transform="translate(548.41 877.45) rotate(-90)" font-size="16.6" textLength="23.3" lengthAdjust="spacingAndGlyphs" fill="#383838">XS1</text>
<text transform="translate(548.41 945.75) rotate(-90)" font-size="16.6" textLength="27.5" lengthAdjust="spacingAndGlyphs" fill="#383838">USB</text>
<text transform="translate(614.51 856.75) rotate(-90)" font-size="16.6" textLength="24.3" lengthAdjust="spacingAndGlyphs" fill="#383838">XS2</text>
<text transform="translate(614.51 973.4) rotate(-90)" font-size="16.6" textLength="56.4" lengthAdjust="spacingAndGlyphs" fill="#383838">Ethernet</text>
<text transform="translate(667.31 946.75) rotate(-90)" font-size="16.3" textLength="32.7" lengthAdjust="spacingAndGlyphs" fill="#383838">XP34</text>
<text transform="translate(691.78 893.2) rotate(-90)" font-size="12.8" textLength="21.6" lengthAdjust="spacingAndGlyphs" fill="#383838">GND</text>
<text transform="translate(707.78 893.2) rotate(-90)" font-size="12.8" textLength="15.6" lengthAdjust="spacingAndGlyphs" fill="#383838">FiV</text>
<text transform="translate(724.08 894.15) rotate(-90)" font-size="12.8" textLength="22.3" lengthAdjust="spacingAndGlyphs" fill="#383838">+10V</text>
</g>
<g fill="none" stroke="#ee4d3a" stroke-width="1.150" font-family="Liberation Sans">
<path d="M394.200 234.200 V214.300 H499.900 M546.400 214.300 H642.500 V234.200"/>
<path d="M275.100 288.400 H235.400 V562 M235.400 608.600 V882.900 H275.100"/>
<path d="M798.300 268.500 H818.800 V506.700 M818.800 553.900 V823.600 H798.500"/>
</g>
<g font-family="Liberation Sans">
<text transform="translate(527.21 227.5) rotate(-90)" font-size="12.6" textLength="33.6" lengthAdjust="spacingAndGlyphs" fill="#ee4d3a">Порт 1</text>
<text transform="translate(238.01 602.2) rotate(-90)" font-size="12.6" textLength="35.6" lengthAdjust="spacingAndGlyphs" fill="#ee4d3a">Порт 3</text>
<text transform="translate(823.91 548.25) rotate(-90)" font-size="12.6" textLength="35.5" lengthAdjust="spacingAndGlyphs" fill="#ee4d3a">Порт 2</text>
</g>
<path d="M260.500 1008.500 H815 L806 1022 H249Z" fill="#9aba2c"/>
<g font-family="Liberation Sans"><text x="405" y="1027.500" font-size="19.500" textLength="246" lengthAdjust="spacingAndGlyphs" fill="#2f2f2f"><tspan font-weight="bold">Fig. 2.</tspan> Scheme of connection</text></g>
<g fill="none" stroke="#4a4a4a" stroke-width="1.300" font-family="Liberation Sans">
<rect x="976.7" y="161.7" width="326.9" height="98.6"/>
<path d="M976.7 194.4L1303.6 194.4"/>
<path d="M976.7 227.3L1303.6 227.3"/>
<path d="M1071.1 161.7L1071.1 260.3"/>
<path d="M1176.7 161.7L1176.7 260.3"/>
<path d="M976.800 400.7 H1305.200 V708.82 H976.800 M976.800 400.7 V969.5 H1145.800"/>
<path d="M1030.9 400.7L1030.9 969.5"/>
<path d="M1084.7 422.1L1084.7 446.5"/>
<path d="M1202 400.7L1202 708.82"/>
<path d="M1253.9 422.1L1253.9 446.5"/>
<path d="M1030.9 422.1L1145.8 422.1"/>
<path d="M1202 422.1L1305.2 422.1"/>
<path d="M976.8 446.5L1305.2 446.5"/>
<path d="M976.8 479.29L1305.2 479.29"/>
<path d="M976.8 512.08L1305.2 512.08"/>
<path d="M976.8 544.87L1305.2 544.87"/>
<path d="M976.8 577.66L1305.2 577.66"/>
<path d="M976.8 610.45L1305.2 610.45"/>
<path d="M976.8 643.24L1305.2 643.24"/>
<path d="M976.8 676.03L1305.2 676.03"/>
<path d="M976.8 708.82L1145.8 708.82"/>
<path d="M976.8 741.61L1145.8 741.61"/>
<path d="M976.8 774.4L1145.8 774.4"/>
<path d="M976.8 807.19L1145.8 807.19"/>
<path d="M976.8 839.98L1145.8 839.98"/>
<path d="M976.8 872.77L1145.8 872.77"/>
<path d="M976.8 905.56L1145.8 905.56"/>
<path d="M976.8 938.35L1145.8 938.35"/>
<path d="M1145.8 400.1L1145.8 970.1" stroke-width="3.2" stroke="#111"/>
<rect x="1342.2" y="161.7" width="277" height="721.1"/>
<path d="M1342.2 199.2L1619.2 199.2"/>
<path d="M1342.2 226.7L1619.2 226.7"/>
<path d="M1342.2 254.2L1619.2 254.2"/>
<path d="M1342.2 281.7L1619.2 281.7"/>
<path d="M1342.2 309.2L1619.2 309.2"/>
<path d="M1342.2 336.7L1619.2 336.7"/>
<path d="M1342.2 364.2L1619.2 364.2"/>
<path d="M1342.2 391.7L1619.2 391.7"/>
<path d="M1342.2 419.2L1619.2 419.2"/>
<path d="M1342.2 446.7L1619.2 446.7"/>
<path d="M1342.2 474.2L1619.2 474.2"/>
<path d="M1342.2 501.7L1619.2 501.7"/>
<path d="M1342.2 529.2L1619.2 529.2"/>
<path d="M1342.2 556.7L1619.2 556.7"/>
<path d="M1342.2 584.2L1619.2 584.2"/>
<path d="M1342.2 611.7L1619.2 611.7"/>
<path d="M1342.2 639.2L1619.2 639.2"/>
<path d="M1342.2 666.7L1619.2 666.7"/>
<path d="M1342.2 692.8L1619.2 692.8"/>
<path d="M1342.2 719.2L1619.2 719.2"/>
<path d="M1342.2 746.7L1619.2 746.7"/>
<path d="M1342.2 774.4L1619.2 774.4"/>
<path d="M1342.2 802.2L1619.2 802.2"/>
<path d="M1342.2 830L1619.2 830"/>
<path d="M1342.2 857.8L1619.2 857.8"/>
<path d="M1409.4 161.7L1409.4 882.8"/>
<path d="M1522.2 161.7L1522.2 882.8"/>
</g>
<g font-family="Liberation Sans">
<text x="996.04" y="183.66" font-size="15.3" textLength="55.72" lengthAdjust="spacingAndGlyphs" fill="#231f20" stroke="#231f20" stroke-width="0.45">Connect</text>
<text x="1102.05" y="183.66" font-size="15.3" textLength="43.7" lengthAdjust="spacingAndGlyphs" fill="#231f20" stroke="#231f20" stroke-width="0.45">LED26</text>
<text x="1222.54" y="183.66" font-size="15.3" textLength="35.13" lengthAdjust="spacingAndGlyphs" fill="#231f20" stroke="#231f20" stroke-width="0.45">XP51</text>
<text x="1000.84" y="216.56" font-size="15.3" textLength="46.13" lengthAdjust="spacingAndGlyphs" fill="#231f20" stroke="#231f20" stroke-width="0.45">Packet</text>
<text x="1102.05" y="216.56" font-size="15.3" textLength="43.7" lengthAdjust="spacingAndGlyphs" fill="#231f20" stroke="#231f20" stroke-width="0.45">LED27</text>
<text x="1222.54" y="216.56" font-size="15.3" textLength="35.13" lengthAdjust="spacingAndGlyphs" fill="#231f20" stroke="#231f20" stroke-width="0.45">XP52</text>
<text x="1002.1" y="249.46" font-size="15.3" textLength="43.6" lengthAdjust="spacingAndGlyphs" fill="#231f20" stroke="#231f20" stroke-width="0.45">E-stop</text>
<text x="1102.05" y="249.46" font-size="15.3" textLength="43.7" lengthAdjust="spacingAndGlyphs" fill="#231f20" stroke="#231f20" stroke-width="0.45">LED28</text>
<text x="1222.54" y="249.46" font-size="15.3" textLength="35.13" lengthAdjust="spacingAndGlyphs" fill="#231f20" stroke="#231f20" stroke-width="0.45">XP53</text>
<text x="1046.7" y="304.12" font-size="19.5" textLength="56.76" lengthAdjust="spacingAndGlyphs" fill="#333" stroke="#333" stroke-width="0.7">Tab. 1.</text>
<text x="1107.95" y="304.12" font-size="19.5" textLength="132.72" lengthAdjust="spacingAndGlyphs" fill="#595959">Controller state</text>
<text x="986.85" y="429.05" font-size="15" textLength="34.11" lengthAdjust="spacingAndGlyphs" fill="#231f20" stroke="#231f20" stroke-width="0.45">Input</text>
<text x="1063.87" y="416.95" font-size="15" textLength="49.06" lengthAdjust="spacingAndGlyphs" fill="#231f20" stroke="#231f20" stroke-width="0.45">MACH3</text>
<text x="1043.95" y="439.85" font-size="15" textLength="27.69" lengthAdjust="spacingAndGlyphs" fill="#231f20" stroke="#231f20" stroke-width="0.45">Port</text>
<text x="1104.68" y="439.85" font-size="15" textLength="21.24" lengthAdjust="spacingAndGlyphs" fill="#231f20" stroke="#231f20" stroke-width="0.45">Pin</text>
<text x="1155.56" y="429.05" font-size="15" textLength="36.69" lengthAdjust="spacingAndGlyphs" fill="#231f20" stroke="#231f20" stroke-width="0.45">Relay</text>
<text x="1229.07" y="416.95" font-size="15" textLength="49.06" lengthAdjust="spacingAndGlyphs" fill="#231f20" stroke="#231f20" stroke-width="0.45">MACH3</text>
<text x="1214.15" y="439.85" font-size="15" textLength="27.69" lengthAdjust="spacingAndGlyphs" fill="#231f20" stroke="#231f20" stroke-width="0.45">Port</text>
<text x="1268.88" y="439.85" font-size="15" textLength="21.24" lengthAdjust="spacingAndGlyphs" fill="#231f20" stroke="#231f20" stroke-width="0.45">Pin</text>
<text x="992.54" y="468.64" font-size="15" textLength="22.73" lengthAdjust="spacingAndGlyphs" fill="#231f20" stroke="#231f20" stroke-width="0.45">IN1</text>
<text x="1077.2" y="468.64" font-size="15" textLength="22.41" lengthAdjust="spacingAndGlyphs" fill="#231f20" stroke="#231f20" stroke-width="0.45">2/1</text>
<text x="1165.01" y="468.64" font-size="15" textLength="17.77" lengthAdjust="spacingAndGlyphs" fill="#231f20" stroke="#231f20" stroke-width="0.45">K1</text>
<text x="1242.39" y="468.64" font-size="15" textLength="22.41" lengthAdjust="spacingAndGlyphs" fill="#231f20" stroke="#231f20" stroke-width="0.45">3/1</text>
<text x="992.54" y="501.44" font-size="15" textLength="22.73" lengthAdjust="spacingAndGlyphs" fill="#231f20" stroke="#231f20" stroke-width="0.45">IN2</text>
<text x="1077.2" y="501.44" font-size="15" textLength="22.41" lengthAdjust="spacingAndGlyphs" fill="#231f20" stroke="#231f20" stroke-width="0.45">2/2</text>
<text x="1165.01" y="501.44" font-size="15" textLength="17.77" lengthAdjust="spacingAndGlyphs" fill="#231f20" stroke="#231f20" stroke-width="0.45">K2</text>
<text x="1242.39" y="501.44" font-size="15" textLength="22.41" lengthAdjust="spacingAndGlyphs" fill="#231f20" stroke="#231f20" stroke-width="0.45">3/2</text>
<text x="992.54" y="534.23" font-size="15" textLength="22.73" lengthAdjust="spacingAndGlyphs" fill="#231f20" stroke="#231f20" stroke-width="0.45">IN3</text>
<text x="1077.2" y="534.23" font-size="15" textLength="22.41" lengthAdjust="spacingAndGlyphs" fill="#231f20" stroke="#231f20" stroke-width="0.45">2/3</text>
<text x="1165.01" y="534.23" font-size="15" textLength="17.77" lengthAdjust="spacingAndGlyphs" fill="#231f20" stroke="#231f20" stroke-width="0.45">K3</text>
<text x="1242.39" y="534.23" font-size="15" textLength="22.41" lengthAdjust="spacingAndGlyphs" fill="#231f20" stroke="#231f20" stroke-width="0.45">3/3</text>
<text x="992.54" y="567.01" font-size="15" textLength="22.73" lengthAdjust="spacingAndGlyphs" fill="#231f20" stroke="#231f20" stroke-width="0.45">IN4</text>
<text x="1077.2" y="567.01" font-size="15" textLength="22.41" lengthAdjust="spacingAndGlyphs" fill="#231f20" stroke="#231f20" stroke-width="0.45">2/4</text>
<text x="1165.01" y="567.01" font-size="15" textLength="17.77" lengthAdjust="spacingAndGlyphs" fill="#231f20" stroke="#231f20" stroke-width="0.45">K4</text>
<text x="1242.39" y="567.01" font-size="15" textLength="22.41" lengthAdjust="spacingAndGlyphs" fill="#231f20" stroke="#231f20" stroke-width="0.45">3/4</text>
<text x="992.54" y="599.81" font-size="15" textLength="22.73" lengthAdjust="spacingAndGlyphs" fill="#231f20" stroke="#231f20" stroke-width="0.45">IN5</text>
<text x="1077.2" y="599.81" font-size="15" textLength="22.41" lengthAdjust="spacingAndGlyphs" fill="#231f20" stroke="#231f20" stroke-width="0.45">2/5</text>
<text x="1165.01" y="599.81" font-size="15" textLength="17.77" lengthAdjust="spacingAndGlyphs" fill="#231f20" stroke="#231f20" stroke-width="0.45">K5</text>
<text x="1242.39" y="599.81" font-size="15" textLength="22.41" lengthAdjust="spacingAndGlyphs" fill="#231f20" stroke="#231f20" stroke-width="0.45">3/5</text>
<text x="992.54" y="632.6" font-size="15" textLength="22.73" lengthAdjust="spacingAndGlyphs" fill="#231f20" stroke="#231f20" stroke-width="0.45">IN6</text>
<text x="1077.2" y="632.6" font-size="15" textLength="22.41" lengthAdjust="spacingAndGlyphs" fill="#231f20" stroke="#231f20" stroke-width="0.45">2/6</text>
<text x="1165.01" y="632.6" font-size="15" textLength="17.77" lengthAdjust="spacingAndGlyphs" fill="#231f20" stroke="#231f20" stroke-width="0.45">K6</text>
<text x="1242.39" y="632.6" font-size="15" textLength="22.41" lengthAdjust="spacingAndGlyphs" fill="#231f20" stroke="#231f20" stroke-width="0.45">3/6</text>
<text x="992.54" y="665.38" font-size="15" textLength="22.73" lengthAdjust="spacingAndGlyphs" fill="#231f20" stroke="#231f20" stroke-width="0.45">IN7</text>
<text x="1077.2" y="665.38" font-size="15" textLength="22.41" lengthAdjust="spacingAndGlyphs" fill="#231f20" stroke="#231f20" stroke-width="0.45">2/7</text>
<text x="1165.01" y="665.38" font-size="15" textLength="17.77" lengthAdjust="spacingAndGlyphs" fill="#231f20" stroke="#231f20" stroke-width="0.45">K7</text>
<text x="1242.39" y="665.38" font-size="15" textLength="22.41" lengthAdjust="spacingAndGlyphs" fill="#231f20" stroke="#231f20" stroke-width="0.45">3/7</text>
<text x="992.54" y="698.17" font-size="15" textLength="22.73" lengthAdjust="spacingAndGlyphs" fill="#231f20" stroke="#231f20" stroke-width="0.45">IN8</text>
<text x="1077.2" y="698.17" font-size="15" textLength="22.41" lengthAdjust="spacingAndGlyphs" fill="#231f20" stroke="#231f20" stroke-width="0.45">2/8</text>
<text x="1165.01" y="698.17" font-size="15" textLength="17.77" lengthAdjust="spacingAndGlyphs" fill="#231f20" stroke="#231f20" stroke-width="0.45">K8</text>
<text x="1242.39" y="698.17" font-size="15" textLength="22.41" lengthAdjust="spacingAndGlyphs" fill="#231f20" stroke="#231f20" stroke-width="0.45">3/8</text>
<text x="992.54" y="730.96" font-size="15" textLength="22.73" lengthAdjust="spacingAndGlyphs" fill="#231f20" stroke="#231f20" stroke-width="0.45">IN9</text>
<text x="1077.2" y="730.96" font-size="15" textLength="22.41" lengthAdjust="spacingAndGlyphs" fill="#231f20" stroke="#231f20" stroke-width="0.45">2/9</text>
<text x="988.4" y="763.75" font-size="15" textLength="31" lengthAdjust="spacingAndGlyphs" fill="#231f20" stroke="#231f20" stroke-width="0.45">IN10</text>
<text x="1073.06" y="763.75" font-size="15" textLength="30.69" lengthAdjust="spacingAndGlyphs" fill="#231f20" stroke="#231f20" stroke-width="0.45">2/10</text>
<text x="988.4" y="796.55" font-size="15" textLength="31" lengthAdjust="spacingAndGlyphs" fill="#231f20" stroke="#231f20" stroke-width="0.45">IN11</text>
<text x="1073.06" y="796.55" font-size="15" textLength="30.69" lengthAdjust="spacingAndGlyphs" fill="#231f20" stroke="#231f20" stroke-width="0.45">2/11</text>
<text x="988.4" y="829.34" font-size="15" textLength="31" lengthAdjust="spacingAndGlyphs" fill="#231f20" stroke="#231f20" stroke-width="0.45">IN12</text>
<text x="1073.06" y="829.34" font-size="15" textLength="30.69" lengthAdjust="spacingAndGlyphs" fill="#231f20" stroke="#231f20" stroke-width="0.45">2/12</text>
<text x="988.4" y="862.12" font-size="15" textLength="31" lengthAdjust="spacingAndGlyphs" fill="#231f20" stroke="#231f20" stroke-width="0.45">IN13</text>
<text x="1073.06" y="862.12" font-size="15" textLength="30.69" lengthAdjust="spacingAndGlyphs" fill="#231f20" stroke="#231f20" stroke-width="0.45">2/13</text>
<text x="988.4" y="894.91" font-size="15" textLength="31" lengthAdjust="spacingAndGlyphs" fill="#231f20" stroke="#231f20" stroke-width="0.45">IN14</text>
<text x="1073.06" y="894.91" font-size="15" textLength="30.69" lengthAdjust="spacingAndGlyphs" fill="#231f20" stroke="#231f20" stroke-width="0.45">2/14</text>
<text x="988.4" y="927.7" font-size="15" textLength="31" lengthAdjust="spacingAndGlyphs" fill="#231f20" stroke="#231f20" stroke-width="0.45">IN15</text>
<text x="1073.06" y="927.7" font-size="15" textLength="30.69" lengthAdjust="spacingAndGlyphs" fill="#231f20" stroke="#231f20" stroke-width="0.45">2/15</text>
<text x="988.4" y="959.67" font-size="15" textLength="31" lengthAdjust="spacingAndGlyphs" fill="#231f20" stroke="#231f20" stroke-width="0.45">IN16</text>
<text x="1073.06" y="959.67" font-size="15" textLength="30.69" lengthAdjust="spacingAndGlyphs" fill="#231f20" stroke="#231f20" stroke-width="0.45">2/16</text>
<text x="1035.8" y="1021.73" font-size="19.5" textLength="56.76" lengthAdjust="spacingAndGlyphs" fill="#333" stroke="#333" stroke-width="0.7">Tab. 2.</text>
<text x="1097.05" y="1021.73" font-size="19.5" textLength="156.99" lengthAdjust="spacingAndGlyphs" fill="#595959">Input/output ports</text>
<text x="1359.49" y="185.76" font-size="13.6" textLength="32.61" lengthAdjust="spacingAndGlyphs" fill="#231f20" stroke="#231f20" stroke-width="0.45">DB25</text>
<text x="1424.2" y="177.26" font-size="13.6" textLength="83.19" lengthAdjust="spacingAndGlyphs" fill="#231f20" stroke="#231f20" stroke-width="0.45">Pin number in</text>
<text x="1443.56" y="193.76" font-size="13.6" textLength="44.49" lengthAdjust="spacingAndGlyphs" fill="#231f20" stroke="#231f20" stroke-width="0.45">MACH3</text>
<text x="1532.95" y="186.16" font-size="13.6" textLength="75.49" lengthAdjust="spacingAndGlyphs" fill="#231f20" stroke="#231f20" stroke-width="0.45">Input/output</text>
<text x="1372.05" y="218.11" font-size="13.6" textLength="7.51" lengthAdjust="spacingAndGlyphs" fill="#231f20" stroke="#231f20" stroke-width="0.45">1</text>
<text x="1462.05" y="218.11" font-size="13.6" textLength="7.51" lengthAdjust="spacingAndGlyphs" fill="#231f20" stroke="#231f20" stroke-width="0.45">1</text>
<text x="1551.07" y="218.41" font-size="13.6" textLength="39.26" lengthAdjust="spacingAndGlyphs" fill="#231f20" stroke="#231f20" stroke-width="0.45">output</text>
<text x="1372.05" y="245.61" font-size="13.6" textLength="7.51" lengthAdjust="spacingAndGlyphs" fill="#231f20" stroke="#231f20" stroke-width="0.45">2</text>
<text x="1462.05" y="245.61" font-size="13.6" textLength="7.51" lengthAdjust="spacingAndGlyphs" fill="#231f20" stroke="#231f20" stroke-width="0.45">2</text>
<text x="1551.07" y="245.91" font-size="13.6" textLength="39.26" lengthAdjust="spacingAndGlyphs" fill="#231f20" stroke="#231f20" stroke-width="0.45">output</text>
<text x="1372.05" y="273.11" font-size="13.6" textLength="7.51" lengthAdjust="spacingAndGlyphs" fill="#231f20" stroke="#231f20" stroke-width="0.45">3</text>
<text x="1462.05" y="273.11" font-size="13.6" textLength="7.51" lengthAdjust="spacingAndGlyphs" fill="#231f20" stroke="#231f20" stroke-width="0.45">3</text>
<text x="1551.07" y="273.41" font-size="13.6" textLength="39.26" lengthAdjust="spacingAndGlyphs" fill="#231f20" stroke="#231f20" stroke-width="0.45">output</text>
<text x="1372.05" y="300.61" font-size="13.6" textLength="7.51" lengthAdjust="spacingAndGlyphs" fill="#231f20" stroke="#231f20" stroke-width="0.45">4</text>
<text x="1462.05" y="300.61" font-size="13.6" textLength="7.51" lengthAdjust="spacingAndGlyphs" fill="#231f20" stroke="#231f20" stroke-width="0.45">4</text>
<text x="1551.07" y="300.91" font-size="13.6" textLength="39.26" lengthAdjust="spacingAndGlyphs" fill="#231f20" stroke="#231f20" stroke-width="0.45">output</text>
<text x="1372.05" y="328.11" font-size="13.6" textLength="7.51" lengthAdjust="spacingAndGlyphs" fill="#231f20" stroke="#231f20" stroke-width="0.45">5</text>
<text x="1462.05" y="328.11" font-size="13.6" textLength="7.51" lengthAdjust="spacingAndGlyphs" fill="#231f20" stroke="#231f20" stroke-width="0.45">5</text>
<text x="1551.07" y="328.41" font-size="13.6" textLength="39.26" lengthAdjust="spacingAndGlyphs" fill="#231f20" stroke="#231f20" stroke-width="0.45">output</text>
<text x="1372.05" y="355.61" font-size="13.6" textLength="7.51" lengthAdjust="spacingAndGlyphs" fill="#231f20" stroke="#231f20" stroke-width="0.45">6</text>
<text x="1462.05" y="355.61" font-size="13.6" textLength="7.51" lengthAdjust="spacingAndGlyphs" fill="#231f20" stroke="#231f20" stroke-width="0.45">6</text>
<text x="1551.07" y="355.91" font-size="13.6" textLength="39.26" lengthAdjust="spacingAndGlyphs" fill="#231f20" stroke="#231f20" stroke-width="0.45">output</text>
<text x="1372.05" y="383.11" font-size="13.6" textLength="7.51" lengthAdjust="spacingAndGlyphs" fill="#231f20" stroke="#231f20" stroke-width="0.45">7</text>
<text x="1462.05" y="383.11" font-size="13.6" textLength="7.51" lengthAdjust="spacingAndGlyphs" fill="#231f20" stroke="#231f20" stroke-width="0.45">7</text>
<text x="1551.07" y="383.41" font-size="13.6" textLength="39.26" lengthAdjust="spacingAndGlyphs" fill="#231f20" stroke="#231f20" stroke-width="0.45">output</text>
<text x="1372.05" y="410.61" font-size="13.6" textLength="7.51" lengthAdjust="spacingAndGlyphs" fill="#231f20" stroke="#231f20" stroke-width="0.45">8</text>
<text x="1462.05" y="410.61" font-size="13.6" textLength="7.51" lengthAdjust="spacingAndGlyphs" fill="#231f20" stroke="#231f20" stroke-width="0.45">8</text>
<text x="1551.07" y="410.91" font-size="13.6" textLength="39.26" lengthAdjust="spacingAndGlyphs" fill="#231f20" stroke="#231f20" stroke-width="0.45">output</text>
<text x="1372.05" y="438.11" font-size="13.6" textLength="7.51" lengthAdjust="spacingAndGlyphs" fill="#231f20" stroke="#231f20" stroke-width="0.45">9</text>
<text x="1462.05" y="438.11" font-size="13.6" textLength="7.51" lengthAdjust="spacingAndGlyphs" fill="#231f20" stroke="#231f20" stroke-width="0.45">9</text>
<text x="1551.07" y="438.41" font-size="13.6" textLength="39.26" lengthAdjust="spacingAndGlyphs" fill="#231f20" stroke="#231f20" stroke-width="0.45">output</text>
<text x="1368.29" y="465.61" font-size="13.6" textLength="15.01" lengthAdjust="spacingAndGlyphs" fill="#231f20" stroke="#231f20" stroke-width="0.45">10</text>
<text x="1458.29" y="465.61" font-size="13.6" textLength="15.01" lengthAdjust="spacingAndGlyphs" fill="#231f20" stroke="#231f20" stroke-width="0.45">10</text>
<text x="1555.38" y="465.91" font-size="13.6" textLength="30.64" lengthAdjust="spacingAndGlyphs" fill="#231f20" stroke="#231f20" stroke-width="0.45">input</text>
<text x="1368.29" y="493.11" font-size="13.6" textLength="15.01" lengthAdjust="spacingAndGlyphs" fill="#231f20" stroke="#231f20" stroke-width="0.45">11</text>
<text x="1458.29" y="493.11" font-size="13.6" textLength="15.01" lengthAdjust="spacingAndGlyphs" fill="#231f20" stroke="#231f20" stroke-width="0.45">11</text>
<text x="1555.38" y="493.41" font-size="13.6" textLength="30.64" lengthAdjust="spacingAndGlyphs" fill="#231f20" stroke="#231f20" stroke-width="0.45">input</text>
<text x="1368.29" y="520.61" font-size="13.6" textLength="15.01" lengthAdjust="spacingAndGlyphs" fill="#231f20" stroke="#231f20" stroke-width="0.45">12</text>
<text x="1458.29" y="520.61" font-size="13.6" textLength="15.01" lengthAdjust="spacingAndGlyphs" fill="#231f20" stroke="#231f20" stroke-width="0.45">12</text>
<text x="1555.38" y="520.91" font-size="13.6" textLength="30.64" lengthAdjust="spacingAndGlyphs" fill="#231f20" stroke="#231f20" stroke-width="0.45">input</text>
<text x="1368.29" y="548.11" font-size="13.6" textLength="15.01" lengthAdjust="spacingAndGlyphs" fill="#231f20" stroke="#231f20" stroke-width="0.45">13</text>
<text x="1458.29" y="548.11" font-size="13.6" textLength="15.01" lengthAdjust="spacingAndGlyphs" fill="#231f20" stroke="#231f20" stroke-width="0.45">13</text>
<text x="1555.38" y="548.41" font-size="13.6" textLength="30.64" lengthAdjust="spacingAndGlyphs" fill="#231f20" stroke="#231f20" stroke-width="0.45">input</text>
<text x="1368.29" y="575.61" font-size="13.6" textLength="15.01" lengthAdjust="spacingAndGlyphs" fill="#231f20" stroke="#231f20" stroke-width="0.45">14</text>
<text x="1458.29" y="575.61" font-size="13.6" textLength="15.01" lengthAdjust="spacingAndGlyphs" fill="#231f20" stroke="#231f20" stroke-width="0.45">14</text>
<text x="1551.07" y="575.91" font-size="13.6" textLength="39.26" lengthAdjust="spacingAndGlyphs" fill="#231f20" stroke="#231f20" stroke-width="0.45">output</text>
<text x="1368.29" y="603.11" font-size="13.6" textLength="15.01" lengthAdjust="spacingAndGlyphs" fill="#231f20" stroke="#231f20" stroke-width="0.45">15</text>
<text x="1458.29" y="603.11" font-size="13.6" textLength="15.01" lengthAdjust="spacingAndGlyphs" fill="#231f20" stroke="#231f20" stroke-width="0.45">15</text>
<text x="1555.38" y="603.41" font-size="13.6" textLength="30.64" lengthAdjust="spacingAndGlyphs" fill="#231f20" stroke="#231f20" stroke-width="0.45">input</text>
<text x="1368.29" y="630.61" font-size="13.6" textLength="15.01" lengthAdjust="spacingAndGlyphs" fill="#231f20" stroke="#231f20" stroke-width="0.45">16</text>
<text x="1458.29" y="630.61" font-size="13.6" textLength="15.01" lengthAdjust="spacingAndGlyphs" fill="#231f20" stroke="#231f20" stroke-width="0.45">16</text>
<text x="1551.07" y="630.91" font-size="13.6" textLength="39.26" lengthAdjust="spacingAndGlyphs" fill="#231f20" stroke="#231f20" stroke-width="0.45">output</text>
<text x="1368.29" y="658.11" font-size="13.6" textLength="15.01" lengthAdjust="spacingAndGlyphs" fill="#231f20" stroke="#231f20" stroke-width="0.45">17</text>
<text x="1458.29" y="658.11" font-size="13.6" textLength="15.01" lengthAdjust="spacingAndGlyphs" fill="#231f20" stroke="#231f20" stroke-width="0.45">17</text>
<text x="1551.07" y="658.41" font-size="13.6" textLength="39.26" lengthAdjust="spacingAndGlyphs" fill="#231f20" stroke="#231f20" stroke-width="0.45">output</text>
<text x="1368.29" y="684.91" font-size="13.6" textLength="15.01" lengthAdjust="spacingAndGlyphs" fill="#231f20" stroke="#231f20" stroke-width="0.45">18</text>
<text x="1452.17" y="684.91" font-size="13.6" textLength="27.27" lengthAdjust="spacingAndGlyphs" fill="#231f20" stroke="#231f20" stroke-width="0.45">GND</text>
<text x="1568.18" y="685.41" font-size="13.6" textLength="5.03" lengthAdjust="spacingAndGlyphs" fill="#231f20" stroke="#231f20" stroke-width="0.45">-</text>
<text x="1368.29" y="711.16" font-size="13.6" textLength="15.01" lengthAdjust="spacingAndGlyphs" fill="#231f20" stroke="#231f20" stroke-width="0.45">19</text>
<text x="1452.17" y="711.16" font-size="13.6" textLength="27.27" lengthAdjust="spacingAndGlyphs" fill="#231f20" stroke="#231f20" stroke-width="0.45">GND</text>
<text x="1568.18" y="711.66" font-size="13.6" textLength="5.03" lengthAdjust="spacingAndGlyphs" fill="#231f20" stroke="#231f20" stroke-width="0.45">-</text>
<text x="1368.29" y="738.11" font-size="13.6" textLength="15.01" lengthAdjust="spacingAndGlyphs" fill="#231f20" stroke="#231f20" stroke-width="0.45">20</text>
<text x="1452.17" y="738.11" font-size="13.6" textLength="27.27" lengthAdjust="spacingAndGlyphs" fill="#231f20" stroke="#231f20" stroke-width="0.45">GND</text>
<text x="1568.18" y="738.61" font-size="13.6" textLength="5.03" lengthAdjust="spacingAndGlyphs" fill="#231f20" stroke="#231f20" stroke-width="0.45">-</text>
<text x="1368.29" y="765.71" font-size="13.6" textLength="15.01" lengthAdjust="spacingAndGlyphs" fill="#231f20" stroke="#231f20" stroke-width="0.45">21</text>
<text x="1452.17" y="765.71" font-size="13.6" textLength="27.27" lengthAdjust="spacingAndGlyphs" fill="#231f20" stroke="#231f20" stroke-width="0.45">GND</text>
<text x="1568.18" y="766.21" font-size="13.6" textLength="5.03" lengthAdjust="spacingAndGlyphs" fill="#231f20" stroke="#231f20" stroke-width="0.45">-</text>
<text x="1368.29" y="793.46" font-size="13.6" textLength="15.01" lengthAdjust="spacingAndGlyphs" fill="#231f20" stroke="#231f20" stroke-width="0.45">22</text>
<text x="1452.17" y="793.46" font-size="13.6" textLength="27.27" lengthAdjust="spacingAndGlyphs" fill="#231f20" stroke="#231f20" stroke-width="0.45">GND</text>
<text x="1568.18" y="793.96" font-size="13.6" textLength="5.03" lengthAdjust="spacingAndGlyphs" fill="#231f20" stroke="#231f20" stroke-width="0.45">-</text>
<text x="1368.29" y="821.26" font-size="13.6" textLength="15.01" lengthAdjust="spacingAndGlyphs" fill="#231f20" stroke="#231f20" stroke-width="0.45">23</text>
<text x="1452.17" y="821.26" font-size="13.6" textLength="27.27" lengthAdjust="spacingAndGlyphs" fill="#231f20" stroke="#231f20" stroke-width="0.45">GND</text>
<text x="1568.18" y="821.76" font-size="13.6" textLength="5.03" lengthAdjust="spacingAndGlyphs" fill="#231f20" stroke="#231f20" stroke-width="0.45">-</text>
<text x="1368.29" y="849.06" font-size="13.6" textLength="15.01" lengthAdjust="spacingAndGlyphs" fill="#231f20" stroke="#231f20" stroke-width="0.45">24</text>
<text x="1452.17" y="849.06" font-size="13.6" textLength="27.27" lengthAdjust="spacingAndGlyphs" fill="#231f20" stroke="#231f20" stroke-width="0.45">GND</text>
<text x="1568.18" y="849.56" font-size="13.6" textLength="5.03" lengthAdjust="spacingAndGlyphs" fill="#231f20" stroke="#231f20" stroke-width="0.45">-</text>
<text x="1368.29" y="875.46" font-size="13.6" textLength="15.01" lengthAdjust="spacingAndGlyphs" fill="#231f20" stroke="#231f20" stroke-width="0.45">25</text>
<text x="1452.17" y="875.46" font-size="13.6" textLength="27.27" lengthAdjust="spacingAndGlyphs" fill="#231f20" stroke="#231f20" stroke-width="0.45">GND</text>
<text x="1568.18" y="875.96" font-size="13.6" textLength="5.03" lengthAdjust="spacingAndGlyphs" fill="#231f20" stroke="#231f20" stroke-width="0.45">-</text>
<text x="1382.84" y="913.01" font-size="16.6" textLength="18.33" lengthAdjust="spacingAndGlyphs" fill="#231f20" stroke="#231f20" stroke-width="0.45">13</text>
<text x="1565.62" y="913.01" font-size="16.6" textLength="9.16" lengthAdjust="spacingAndGlyphs" fill="#231f20" stroke="#231f20" stroke-width="0.45">1</text>
<text x="1388.54" y="977.11" font-size="16.6" textLength="18.33" lengthAdjust="spacingAndGlyphs" fill="#231f20" stroke="#231f20" stroke-width="0.45">25</text>
<text x="1552.94" y="977.11" font-size="16.6" textLength="18.33" lengthAdjust="spacingAndGlyphs" fill="#231f20" stroke="#231f20" stroke-width="0.45">14</text>
<text x="1341.7" y="1021.73" font-size="19.5" textLength="56.76" lengthAdjust="spacingAndGlyphs" fill="#333" stroke="#333" stroke-width="0.7">Tab. 3.</text>
<text x="1402.95" y="1021.73" font-size="19.5" textLength="215.16" lengthAdjust="spacingAndGlyphs" fill="#595959">Pinout of XS3 connectors</text>
</g>
<path d="M1381.500 925.800 H1579.300 Q1587.200 925.800 1587.200 933.500 V936 Q1587.200 956.400 1565 956.400 H1396 Q1373.600 956.400 1373.600 936 V933.500 Q1373.600 925.800 1381.500 925.800Z" fill="#000"/>
<g fill="#fff">
<circle cx="1390" cy="935.600" r="3.800"/>
<circle cx="1405" cy="935.600" r="3.800"/>
<circle cx="1420" cy="935.600" r="3.800"/>
<circle cx="1435" cy="935.600" r="3.800"/>
<circle cx="1450" cy="935.600" r="3.800"/>
<circle cx="1465" cy="935.600" r="3.800"/>
<circle cx="1480" cy="935.600" r="3.800"/>
<circle cx="1495" cy="935.600" r="3.800"/>
<circle cx="1510" cy="935.600" r="3.800"/>
<circle cx="1525" cy="935.600" r="3.800"/>
<circle cx="1540" cy="935.600" r="3.800"/>
<circle cx="1555" cy="935.600" r="3.800"/>
<circle cx="1570" cy="935.600" r="3.800"/>
<circle cx="1397.8" cy="948.900" r="3.800"/>
<circle cx="1412.77" cy="948.900" r="3.800"/>
<circle cx="1427.74" cy="948.900" r="3.800"/>
<circle cx="1442.71" cy="948.900" r="3.800"/>
<circle cx="1457.68" cy="948.900" r="3.800"/>
<circle cx="1472.65" cy="948.900" r="3.800"/>
<circle cx="1487.62" cy="948.900" r="3.800"/>
<circle cx="1502.59" cy="948.900" r="3.800"/>
<circle cx="1517.56" cy="948.900" r="3.800"/>
<circle cx="1532.53" cy="948.900" r="3.800"/>
<circle cx="1547.5" cy="948.900" r="3.800"/>
<circle cx="1562.47" cy="948.900" r="3.800"/>
</g>
</svg>
<div class="zb" style="left:1737px;top:636px"><svg width="44" height="44"><path d="M15.500 20 H20 V15.500 M28.500 20 H24 V15.500 M15.500 24 H20 V28.500 M28.500 24 H24 V28.500" fill="none" stroke="#5a5a5a" stroke-width="2"/></svg></div>
<div class="zb" style="left:1737px;top:711px"><svg width="44" height="44"><path d="M15 22 H29 M22 15 V29" fill="none" stroke="#5a5a5a" stroke-width="2"/></svg></div>
<div class="zb" style="left:1737px;top:768px"><svg width="44" height="44"><path d="M15 22 H29" fill="none" stroke="#5a5a5a" stroke-width="2"/></svg></div>
</div>
<div id="sb"><div class="th"></div><svg class="abs" style="left:4.500px;top:9.500px" width="10" height="6"><path d="M0 5.500 L4.750 0.500 L9.500 5.500Z" fill="#505050"/></svg><svg class="abs" style="left:4.500px;top:918px" width="10" height="6"><path d="M0 0.500 L4.750 5.500 L9.500 0.500Z" fill="#505050"/></svg></div>
<div id="dl">
<svg class="abs" style="left:27px;top:21px" width="16" height="19"><path d="M.5 .5 H11 L15.500 5 V18.500 H.5Z" fill="#fff" stroke="#9aa0a6"/><path d="M11 .5 V5 H15.500" fill="none" stroke="#9aa0a6"/><rect x="3" y="6" width="9.500" height="8" fill="#1a73e8"/><path d="M4 13 L7 9.500 L9 11.500 L10 10.500 L11.500 13Z" fill="#fff"/></svg>
<div class="nm" style="left:62px;top:20.400px">bob.jpg</div>
<svg class="abs" style="left:252px;top:25px" width="14" height="10"><path d="M1.500 8 L7 2.500 L12.500 8" fill="none" stroke="#5f6368" stroke-width="1.800"/></svg>
<div class="sp" style="left:287px"></div>
<svg class="abs" style="left:311px;top:21px" width="16" height="19"><path d="M.5 .5 H11 L15.500 5 V18.500 H.5Z" fill="#fff" stroke="#9aa0a6"/><path d="M11 .5 V5 H15.500" fill="none" stroke="#9aa0a6"/><rect x="3" y="6" width="9.500" height="8.500" fill="#b3261e"/><rect x="4.500" y="7.500" width="6.500" height="5.500" fill="#1b1b1b"/><path d="M6.500 8.500 L9.500 10.200 L6.500 12Z" fill="#fff"/></svg>
<div class="nm" style="left:345px;letter-spacing:-0.4px">modio_setup1.wmv</div>
<svg class="abs" style="left:536px;top:25px" width="14" height="10"><path d="M1.500 8 L7 2.500 L12.500 8" fill="none" stroke="#5f6368" stroke-width="1.800"/></svg>
<div class="sp" style="left:571px"></div>
<div id="showall">Show all</div>
<svg class="abs" style="left:1813px;top:23px" width="14" height="14"><path d="M1.500 1.500 L12.500 12.500 M12.500 1.500 L1.500 12.500" stroke="#5f6368" stroke-width="2"/></svg>
</div>
<div id="task">
<div class="abs" style="left:0;top:263px;width:78px;height:58px;background:#55645f"></div>
<div class="abs" style="left:75px;top:263px;width:3px;height:58px;background:#78baf8"></div>
<div class="abs" style="left:75px;top:445px;width:3px;height:48px;background:#78baf8"></div>
<svg class="abs" style="left:0;top:0" width="78" height="1080" viewBox="0 0 78 1080">
<g fill="#fff"><path d="M28.900 17.200 L36.900 16.100 V23.900 H28.900Z M38.200 15.900 L49.200 14.500 V23.900 H38.200Z M28.900 25.100 H36.900 V33.600 L28.900 32.500Z M38.200 25.100 H49.200 V35.200 L38.200 33.800Z"/></g>
<circle cx="42" cy="72.100" r="6.900" fill="none" stroke="#fff" stroke-width="1.500"/><path d="M37 77.100 L29.200 84.900" stroke="#fff" stroke-width="1.500"/>
<circle cx="38.500" cy="125" r="8.500" fill="none" stroke="#fff" stroke-width="2.600"/>
<g fill="none" stroke="#fff" stroke-width="1.300"><rect x="29.500" y="170.600" width="11.800" height="7.600"/><path d="M29.500 165 V168.300 H41.300 V165 M29.500 183.800 V180.600 H41.300 V183.800 M47.600 165 V169.900 M47.600 175.200 V183.800"/></g><rect x="46.100" y="171.100" width="3.100" height="3.100" fill="#fff"/>
<path d="M25.200 222 Q25.200 221 26.200 221 H36.600 L38.600 223.300 H52.200 V242.800 H25.200Z" fill="#e9a820"/><path d="M25.200 224.300 H37 L38.800 223.300 H52.200 V242.800 H25.200Z" fill="#fdd663"/><path d="M30.200 243.900 V234.700 Q30.200 233.200 31.700 233.200 H46.200 Q47.700 233.200 47.700 234.700 V243.900 H44 V237.800 H34 V243.900Z" fill="#3c93e8"/>
<path d="M38.70 285.30 L51.15 285.30 A14 14 0 0 0 26.93 284.12 L33.16 294.90 A6.4 6.4 0 0 1 38.70 285.30Z" fill="#dc4a3d"/><path d="M44.24 294.90 L38.02 305.68 A14 14 0 0 0 51.15 285.30 L38.70 285.30 A6.4 6.4 0 0 1 44.24 294.90Z" fill="#fdd142"/><path d="M33.16 294.90 L26.93 284.12 A14 14 0 0 0 38.02 305.68 L44.24 294.90 A6.4 6.4 0 0 1 33.16 294.90Z" fill="#1da260"/><circle cx="38.7" cy="291.7" r="6.4" fill="#f5f5f5"/><circle cx="38.7" cy="291.7" r="5.100" fill="#4c8bf5"/>
<rect x="24" y="335.700" width="30" height="30" fill="#fbdcc2"/><path d="M24 356 Q38 349 54 357 V365.700 H24Z" fill="#fdeee2"/><path d="M33.900 338.600 H43.500 V341.600 H40.600 V355.900 H43.500 V358.900 H33.900 V355.900 H36.800 V341.600 H33.900Z" fill="#d8862a"/><path d="M36.800 341.600 H38.800 L40.600 355.900 H36.800Z" fill="#b86a18"/><text x="39.700" y="363.300" font-size="4.800" font-weight="bold" fill="#e58a2d" font-family="Liberation Sans" textLength="10" lengthAdjust="spacingAndGlyphs">PRO</text>
<rect x="24" y="395" width="30" height="30" fill="#fbdcc2"/><path d="M24 415 Q38 408 54 416 V425 H24Z" fill="#fdeee2"/><path d="M33.100 398.300 H44 Q45.900 398.300 45.900 400.200 V402.800 H38.600 V406.500 H45.500 V410.500 H38.600 V418.200 H33.100Z" fill="#df8c2c"/><path d="M33.100 398.300 H36 V418.200 H33.100Z" fill="#bf6e1a"/><text x="39.700" y="422.600" font-size="4.800" font-weight="bold" fill="#e58a2d" font-family="Liberation Sans" textLength="9.500" lengthAdjust="spacingAndGlyphs">360</text>
<path d="M24.300 463.400 L39 454.900 L53.900 463.400Z" fill="#0a5fb8"/><rect x="24.300" y="463.400" width="29.600" height="19.500" fill="#34bef2"/><path d="M24.300 463.400 L53.900 482.900 H24.300Z" fill="#1f93e4"/><path d="M26.300 463.900 H51.700 L39 472.600Z" fill="#f1f1f1"/>
<path d="M30.200 513.200 H53.900 V532.100 L44 542.800 H24.300 V522Z" fill="#0fa6e0"/><path d="M46.700 521.400 H38.600 A5.650 5.650 0 0 0 38.600 532.700 H46.700" fill="none" stroke="#fff" stroke-width="4.200"/>
<path d="M25 868.400 L16.600 875.800 L25 883.700" fill="none" stroke="#fff" stroke-width="1.300"/>
<path d="M17 908 A4.500 4.500 0 0 1 19 899.500 A5.500 5.500 0 0 1 27.500 904 L27.500 908Z" fill="#9aa3a3"/><path d="M14 911.800 A3.800 3.800 0 0 1 13.200 904.300 A4.800 4.800 0 0 1 21.500 903.300 A4 4 0 0 1 24 911.800Z" fill="#e9ecec"/><circle cx="25.600" cy="910.600" r="5.600" fill="#d9222f"/><path d="M23.200 908.200 L28 913 M28 908.200 L23.200 913" stroke="#fff" stroke-width="1.300"/>
<rect x="44.800" y="901.400" width="14.900" height="10" fill="none" stroke="#fff" stroke-width="1"/><rect x="46.600" y="903.200" width="11.300" height="6.400" fill="#fff"/><rect x="60.200" y="904.200" width="1.600" height="4.400" fill="#fff"/><path d="M41.600 899.200 V902.800 M44.400 899.200 V902.800 M40.800 902.800 H45.200 V905 A2.200 2.200 0 0 1 40.800 905Z M43 907 V911.900 H45" fill="none" stroke="#fff" stroke-width="1"/>
<g fill="none" stroke="#fff" stroke-width="1.250"><path d="M14.200 942 A13.300 13.300 0 0 1 29 929.500"/><path d="M18.200 942 A9.300 9.300 0 0 1 29 933.600"/><path d="M22.200 942 A5.300 5.300 0 0 1 29 937.700"/></g><circle cx="27.500" cy="942.600" r="1.600" fill="#fff"/>
<path d="M41.800 933 H44.500 L47.900 929.700 V942.600 L44.500 939.300 H41.800Z" fill="none" stroke="#fff" stroke-width="1.150"/><path d="M51.200 933.600 A4 4 0 0 1 51.200 938.700 M54.200 930.800 A8 8 0 0 1 54.200 941.500 M57.400 927.600 A12.500 12.500 0 0 1 57.400 944.700" fill="none" stroke="#fff" stroke-width="1.100"/>
<path d="M29 1034.200 H49.300 V1050.600 H35 L30.500 1054.500 V1050.600 H29Z" fill="#fff"/><path d="M32.500 1039 H45.500 M32.500 1042.300 H45.500 M32.500 1045.600 H45.500" stroke="#1f3030" stroke-width="1.100"/><circle cx="48.600" cy="1053.400" r="9.500" fill="#3b3f3f" stroke="#b9bcbc" stroke-width="1.100"/><text x="48.600" y="1058.700" font-size="14.500" font-weight="bold" text-anchor="middle" fill="#fff" font-family="Liberation Sans">7</text>
<rect x="0" y="1074" width="78" height="1" fill="#87928f"/>
</svg>
<div class="abs" style="left:0;top:967px;width:78px;text-align:center;color:#fff;font-size:14.500px;line-height:20px;letter-spacing:-0.500px">13:04</div>
<div class="abs" style="left:0;top:989px;width:78px;text-align:center;color:#fff;font-size:15px;line-height:20px;letter-spacing:0px">10/03/2020</div>
</div>
</body></html>
